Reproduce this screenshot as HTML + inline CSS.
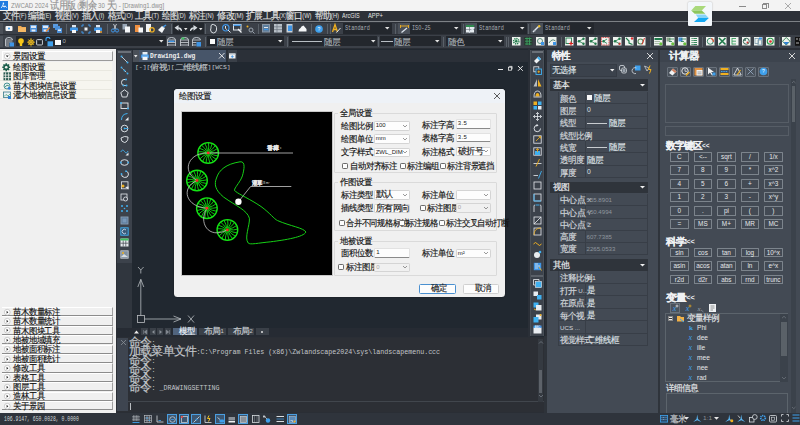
<!DOCTYPE html><html><head><meta charset="utf-8"><style>
*{margin:0;padding:0;box-sizing:border-box}
html,body{width:800px;height:425px;overflow:hidden;background:#2a2e35;font-family:"Liberation Sans",sans-serif}
div{position:absolute}
.t{white-space:nowrap;transform-origin:0 50%}
.c{font-family:'Liberation Sans',sans-serif;font-size:1.46em;letter-spacing:-0.065em;-webkit-text-stroke-width:0.15px;vertical-align:-0.07em;line-height:0}
svg{position:absolute;overflow:visible}
</style></head><body>
<div style="left:0px;top:0px;width:800px;height:11px;background:#f3f3f3;"></div>
<div style="left:0px;top:1.4px;width:8px;height:8.3px;background:#1f7ae0;"></div>
<svg style="left:0px;top:1.4px;" width="8" height="8.3" viewBox="0 0 8 8.3"><circle cx="3.4" cy="2.2" r="0.8" fill="#fff"/><path d="M3.4 2.8 L2.8 4.6 L1.3 6.8 M2.8 4.6 L4.2 6.2 L5 4.8 L6.6 6.6" stroke="#fff" stroke-width="0.9" fill="none"/></svg>
<div class="t" style="left:11px;top:1.04px;font-size:7.3px;line-height:9.12px;color:#8f8f8f;transform:scaleX(0.829);">ZWCAD 2024 <span class="c">试用版</span> (<span class="c">剩余</span> 30 <span class="c">天</span>) - [Drawing1.dwg]</div>
<div style="left:738.5px;top:5.5px;width:7px;height:0.7px;background:#8a8a8a;"></div>
<div style="left:761.5px;top:3.8px;width:5.5px;height:5.5px;border:0.7px solid #8a8a8a;"></div>
<div style="left:763px;top:2.6px;width:5.5px;height:5.5px;border-top:0.7px solid #8a8a8a;border-right:0.7px solid #8a8a8a;"></div>
<svg style="left:785px;top:2.5px;" width="6" height="6" viewBox="0 0 6 6"><path d="M0 0 L6 6 M6 0 L0 6" stroke="#8a8a8a" stroke-width="0.7"/></svg>
<div style="left:0px;top:11px;width:800px;height:10.3px;background:#2d3138;"></div>
<div style="left:0px;top:21.2px;width:800px;height:1px;background:#7d8186;"></div>
<div class="t" style="left:2.5px;top:12.18px;font-size:6.6px;line-height:8.25px;color:#e2e2e2;transform:scaleX(0.857);"><span class="c">文件</span>(F)</div>
<div class="t" style="left:28px;top:12.18px;font-size:6.6px;line-height:8.25px;color:#e2e2e2;transform:scaleX(0.842);"><span class="c">编辑</span>(E)</div>
<div class="t" style="left:55px;top:12.18px;font-size:6.6px;line-height:8.25px;color:#e2e2e2;transform:scaleX(0.863);"><span class="c">视图</span>(V)</div>
<div class="t" style="left:82px;top:12.18px;font-size:6.6px;line-height:8.25px;color:#e2e2e2;transform:scaleX(0.892);"><span class="c">插入</span>(I)</div>
<div class="t" style="left:107.5px;top:12.18px;font-size:6.6px;line-height:8.25px;color:#e2e2e2;transform:scaleX(0.884);"><span class="c">格式</span>(O)</div>
<div class="t" style="left:135px;top:12.18px;font-size:6.6px;line-height:8.25px;color:#e2e2e2;transform:scaleX(0.879);"><span class="c">工具</span>(T)</div>
<div class="t" style="left:162px;top:12.18px;font-size:6.6px;line-height:8.25px;color:#e2e2e2;transform:scaleX(0.842);"><span class="c">绘图</span>(D)</div>
<div class="t" style="left:189.2px;top:12.18px;font-size:6.6px;line-height:8.25px;color:#e2e2e2;transform:scaleX(0.884);"><span class="c">标注</span>(N)</div>
<div class="t" style="left:216.7px;top:12.18px;font-size:6.6px;line-height:8.25px;color:#e2e2e2;transform:scaleX(0.929);"><span class="c">修改</span>(M)</div>
<div class="t" style="left:245.6px;top:12.18px;font-size:6.6px;line-height:8.25px;color:#e2e2e2;transform:scaleX(0.883);"><span class="c">扩展工具</span>(X)</div>
<div class="t" style="left:286.3px;top:12.18px;font-size:6.6px;line-height:8.25px;color:#e2e2e2;transform:scaleX(0.866);"><span class="c">窗口</span>(W)</div>
<div class="t" style="left:314.6px;top:12.18px;font-size:6.6px;line-height:8.25px;color:#e2e2e2;transform:scaleX(0.855);"><span class="c">帮助</span>(H)</div>
<div class="t" style="left:342.2px;top:12.18px;font-size:6.6px;line-height:8.25px;color:#e2e2e2;transform:scaleX(0.826);">ArcGIS</div>
<div class="t" style="left:367.7px;top:12.18px;font-size:6.6px;line-height:8.25px;color:#e2e2e2;transform:scaleX(0.868);">APP+</div>
<div style="left:0px;top:22.2px;width:800px;height:12.8px;background:#2c3037;"></div>
<div style="left:0px;top:22.5px;width:594px;height:11.8px;background:#3b4048;"></div>
<div style="left:0px;top:34px;width:800px;height:15px;background:#2c3037;"></div>
<div style="left:0px;top:35.2px;width:800px;height:13.2px;background:#3b4048;"></div>
<div style="left:0px;top:48.4px;width:800px;height:1.6px;background:#2a2e35;"></div>
<div style="left:0px;top:23px;width:2.5px;height:11px;background:#4b5058;"></div>
<div style="left:0px;top:36px;width:2.5px;height:11px;background:#4b5058;"></div>
<svg style="left:4.5px;top:24.5px;" width="8" height="7" viewBox="0 0 8 7"><rect x="0.5" y="1" width="7" height="5" rx="1" fill="#f4f6f8"/><circle cx="4" cy="3.6" r="1" fill="#3d9be9"/></svg>
<svg style="left:17.5px;top:24.8px;" width="8" height="7" viewBox="0 0 8 7"><path d="M0 1 h3 l1 1 h4 v5 h-8z" fill="#f0a850"/><rect x="0" y="2.5" width="8" height="4.5" fill="#f5b865"/></svg>
<svg style="left:30px;top:24.8px;" width="7" height="7" viewBox="0 0 7 7"><rect x="0" y="0" width="7" height="7" fill="#4b8fd8"/><rect x="1" y="0.6" width="5" height="2.4" fill="#dfe9f5"/><rect x="1.6" y="4.5" width="3.8" height="2" fill="#e8eef5"/></svg>
<svg style="left:42px;top:24.8px;" width="7" height="7" viewBox="0 0 7 7"><rect x="0" y="0" width="7" height="7" fill="#4b8fd8"/><rect x="1" y="0.6" width="5" height="2.4" fill="#dfe9f5"/><rect x="1.6" y="4.5" width="3" height="2" fill="#e8eef5"/><path d="M4 6.5 L7.5 2.5" stroke="#f08a30" stroke-width="1.4"/></svg>
<svg style="left:53px;top:24px;" width="9" height="9" viewBox="0 0 9 9"><rect x="0" y="0" width="5" height="4" fill="#5a9be0"/><rect x="2" y="2" width="5" height="4" fill="#4b8fd8"/><rect x="4" y="4" width="5" height="5" fill="#4b8fd8"/><rect x="5" y="5.5" width="3" height="1.5" fill="#e0eaf5"/></svg>
<div style="left:65.8px;top:24px;width:1.2px;height:9.5px;background:#596068;"></div>
<svg style="left:70px;top:24.5px;" width="8" height="8" viewBox="0 0 8 8"><rect x="2" y="0" width="4" height="2.5" fill="#dfe6ee"/><rect x="0" y="2.5" width="8" height="3.5" rx="0.8" fill="#3f95e6"/><rect x="2" y="5" width="4" height="3" fill="#f4f6f8"/></svg>
<svg style="left:82px;top:24.5px;" width="8" height="8" viewBox="0 0 8 8"><path d="M0 2 V0 H2 M6 0 H8 V2 M8 6 V8 H6 M2 8 H0 V6" stroke="#3f95e6" stroke-width="1" fill="none"/><rect x="2.5" y="2.5" width="3" height="3" fill="#eef2f6"/></svg>
<svg style="left:94px;top:24.5px;" width="8" height="8" viewBox="0 0 8 8"><rect x="2" y="0" width="4" height="2.5" fill="#dfe6ee"/><rect x="0" y="2.5" width="8" height="3.5" rx="0.8" fill="#3f95e6"/><rect x="2" y="5" width="4" height="3" fill="#f4f6f8"/><circle cx="7" cy="7" r="1" fill="#f0a030"/></svg>
<div style="left:107px;top:24px;width:1.2px;height:9.5px;background:#596068;"></div>
<svg style="left:110.5px;top:24.3px;" width="8" height="8.5" viewBox="0 0 8 8.5"><path d="M2.5 0 L5 5 M5.5 0 L3 5" stroke="#dfe6ee" stroke-width="0.8"/><circle cx="2" cy="6.5" r="1.6" stroke="#3f95e6" stroke-width="1" fill="none"/><circle cx="6" cy="6.5" r="1.6" stroke="#3f95e6" stroke-width="1" fill="none"/></svg>
<svg style="left:122px;top:24.3px;" width="8" height="8.5" viewBox="0 0 8 8.5"><rect x="0.5" y="0" width="4.5" height="5.5" fill="#9aa8b8"/><rect x="3" y="2.5" width="5" height="6" fill="#f4f6f8"/></svg>
<svg style="left:134.5px;top:24.3px;" width="8" height="8.5" viewBox="0 0 8 8.5"><rect x="0" y="1" width="5" height="7" fill="#f09040"/><rect x="3.5" y="3.5" width="4.5" height="5" fill="#f4f6f8"/></svg>
<svg style="left:145.5px;top:24.3px;" width="9" height="8.5" viewBox="0 0 9 8.5"><rect x="0" y="0" width="5" height="8" fill="#f0f2f4"/><circle cx="6" cy="5.8" r="2.2" stroke="#f0b020" stroke-width="1.2" fill="none"/></svg>
<svg style="left:158px;top:24.5px;" width="8" height="8" viewBox="0 0 8 8"><path d="M0 5 L4 8 L7 3 L4 1z" fill="#f4f6f8"/><path d="M5 2 L8 0" stroke="#3f95e6" stroke-width="1.5"/></svg>
<div style="left:171.2px;top:24px;width:1.2px;height:9.5px;background:#596068;"></div>
<div style="left:173.2px;top:22.5px;width:30.5px;height:11.5px;background:#23272d;"></div>
<svg style="left:174.5px;top:25.5px;" width="7" height="5" viewBox="0 0 7 5"><path d="M6.5 5 Q6.5 1.5 2.5 1.8 M0.5 1.8 L3 0 V3.6z" stroke="#d8dde2" stroke-width="1.1" fill="#d8dde2"/></svg>
<svg style="left:184px;top:27.5px;" width="3.5" height="2.5" viewBox="0 0 3.5 2.5"><path d="M0 0 H3.5 L1.75 2.2z" fill="#e8e8e8"/></svg>
<svg style="left:189.5px;top:25.5px;" width="7" height="5" viewBox="0 0 7 5"><path d="M0.5 5 Q0.5 1.5 4.5 1.8 M6.5 1.8 L4 0 V3.6z" stroke="#d8dde2" stroke-width="1.1" fill="#d8dde2"/></svg>
<svg style="left:198.8px;top:27.5px;" width="3.5" height="2.5" viewBox="0 0 3.5 2.5"><path d="M0 0 H3.5 L1.75 2.2z" fill="#e8e8e8"/></svg>
<div style="left:205px;top:24px;width:1.2px;height:9.5px;background:#596068;"></div>
<svg style="left:209.5px;top:24px;" width="7" height="9" viewBox="0 0 7 9"><path d="M1 4 V2 Q1 1 2 1 V0.5 Q3.5 0 4 1 Q5.5 0.5 5.5 2 Q6.5 2 6.5 3.5 V6 Q6 9 3.5 9 Q1 9 0.5 6z" stroke="#e8ecf0" stroke-width="0.9" fill="none"/></svg>
<svg style="left:221.5px;top:24px;" width="9" height="9" viewBox="0 0 9 9"><circle cx="3.8" cy="3.8" r="3.2" stroke="#3f95e6" stroke-width="1.2" fill="none"/><path d="M3.5 2 V4.5 L5 5.5 M6 6 L8.5 8.5" stroke="#dfe6ee" stroke-width="1"/></svg>
<svg style="left:233px;top:24.2px;" width="9" height="9" viewBox="0 0 9 9"><rect x="0.5" y="0.5" width="7.5" height="5.5" stroke="#dfe6ee" stroke-width="1" fill="none"/><rect x="0.5" y="0.5" width="7.5" height="1.5" fill="#3f95e6"/><path d="M5 5 L8.5 8.5" stroke="#f4f6f8" stroke-width="1.2"/></svg>
<svg style="left:245.5px;top:24.5px;" width="9" height="9" viewBox="0 0 9 9"><circle cx="1.5" cy="1.5" r="1" fill="#f0b020"/><circle cx="5" cy="5" r="2" stroke="#9aa3ad" stroke-width="1" fill="none"/><path d="M6.5 6.5 L8.5 8.5" stroke="#9aa3ad" stroke-width="1"/></svg>
<div style="left:258px;top:24px;width:1.2px;height:9.5px;background:#596068;"></div>
<svg style="left:261.5px;top:24.3px;" width="8" height="8.5" viewBox="0 0 8 8.5"><rect x="0" y="0" width="8" height="8.5" fill="#8a96a4"/><rect x="1" y="1" width="6" height="6.5" fill="#5d7f9f"/><rect x="2" y="3" width="4" height="1" fill="#e0e8f0"/><rect x="2" y="5" width="4" height="1" fill="#3f95e6"/></svg>
<svg style="left:273.5px;top:24.3px;" width="8" height="8.5" viewBox="0 0 8 8.5"><rect x="0" y="0" width="8" height="8.5" fill="#b8c0c8"/><path d="M0 2.8 H8 M0 5.6 H8 M3 0 V8.5" stroke="#6a747e" stroke-width="0.7"/></svg>
<svg style="left:286px;top:24.3px;" width="8" height="8.5" viewBox="0 0 8 8.5"><rect x="0.5" y="0" width="6" height="8.5" fill="#c8d0d8"/><rect x="2" y="1.5" width="4" height="5.5" fill="#3f95e6"/></svg>
<svg style="left:297.5px;top:25px;" width="9" height="7" viewBox="0 0 9 7"><path d="M0.5 6.5 H8.5 V4 L5.5 0.5 Q3 1 2.5 3 Q0.5 3.5 0.5 6.5z" fill="#f4f6f8"/></svg>
<div style="left:310.8px;top:24px;width:1.2px;height:9.5px;background:#596068;"></div>
<svg style="left:314.5px;top:24.5px;" width="8" height="8" viewBox="0 0 8 8"><circle cx="4" cy="4" r="3.8" fill="#3fa0ec"/><text x="4" y="6" font-size="5" fill="#fff" text-anchor="middle" font-family="Liberation Sans">?</text></svg>
<div style="left:327.2px;top:24px;width:1.2px;height:9.5px;background:#596068;"></div>
<div style="left:329.6px;top:24px;width:1.2px;height:9.5px;background:#596068;"></div>
<svg style="left:332px;top:24.3px;" width="9" height="9" viewBox="0 0 9 9"><path d="M0.5 8 L3 0.5 L5.5 8 M1.5 5.5 H4.5" stroke="#f0b020" stroke-width="1.3" fill="none"/><path d="M4.5 8.5 L8.5 4" stroke="#dfe6ee" stroke-width="1"/></svg>
<div style="left:343.2px;top:22.8px;width:49px;height:11.2px;background:#23272d;"></div>
<svg style="left:385.2px;top:27.4px;" width="4.5" height="2.5" viewBox="0 0 4.5 2.5"><path d="M0 0 H4.5 L2.25 2.5z" fill="#e2e2e2"/></svg>
<div class="t" style="left:345px;top:24.50px;font-size:6.4px;line-height:8.00px;color:#a9aeb3;font-family:Liberation Mono;transform:scaleX(0.812);">Standard</div>
<div style="left:394.5px;top:24px;width:1.2px;height:9.5px;background:#596068;"></div>
<div style="left:398px;top:23px;width:12px;height:11px;background:#4a5059;"></div>
<svg style="left:399.5px;top:24.5px;" width="9" height="8" viewBox="0 0 9 8"><path d="M0.5 1 H8.5" stroke="#f0b020" stroke-width="0.9"/><path d="M0.5 0 V3 M8.5 0 V3" stroke="#f0b020" stroke-width="0.9"/><path d="M1.5 7.5 L7 3" stroke="#dfe6ee" stroke-width="1.2"/></svg>
<div style="left:410px;top:22.8px;width:50.5px;height:11.2px;background:#23272d;"></div>
<svg style="left:453.5px;top:27.4px;" width="4.5" height="2.5" viewBox="0 0 4.5 2.5"><path d="M0 0 H4.5 L2.25 2.5z" fill="#e2e2e2"/></svg>
<div class="t" style="left:411.5px;top:24.50px;font-size:6.4px;line-height:8.00px;color:#a9aeb3;font-family:Liberation Mono;transform:scaleX(0.812);">ISO-25</div>
<div style="left:462.5px;top:24px;width:1.2px;height:9.5px;background:#596068;"></div>
<div style="left:464.5px;top:23px;width:12.5px;height:11px;background:#4a5059;"></div>
<svg style="left:466px;top:24.5px;" width="9" height="8" viewBox="0 0 9 8"><rect x="0" y="0" width="8" height="7.5" fill="#e6ecf0"/><rect x="0" y="0" width="8" height="2" fill="#2f8a4f"/><path d="M0 4.5 H8 M3.5 2 V7.5" stroke="#6a747e" stroke-width="0.6"/><path d="M3 7.5 L8.5 2.5" stroke="#dfe6ee" stroke-width="1.1"/></svg>
<div style="left:477px;top:22.8px;width:50px;height:11.2px;background:#23272d;"></div>
<svg style="left:520px;top:27.4px;" width="4.5" height="2.5" viewBox="0 0 4.5 2.5"><path d="M0 0 H4.5 L2.25 2.5z" fill="#e2e2e2"/></svg>
<div class="t" style="left:478.5px;top:24.50px;font-size:6.4px;line-height:8.00px;color:#a9aeb3;font-family:Liberation Mono;transform:scaleX(0.812);">Standard</div>
<div style="left:528.3px;top:24px;width:1.2px;height:9.5px;background:#596068;"></div>
<div style="left:530.5px;top:23px;width:12.5px;height:11px;background:#4a5059;"></div>
<svg style="left:532px;top:24.5px;" width="9" height="8" viewBox="0 0 9 8"><path d="M1 7 L6.5 1.5" stroke="#dfe6ee" stroke-width="1.4"/><path d="M1.5 5 L3 6.5" stroke="#9aa3ad" stroke-width="1"/><circle cx="7.2" cy="1.3" r="1.2" fill="#f0c030"/></svg>
<div style="left:543px;top:22.8px;width:50.5px;height:11.2px;background:#23272d;"></div>
<svg style="left:586.5px;top:27.4px;" width="4.5" height="2.5" viewBox="0 0 4.5 2.5"><path d="M0 0 H4.5 L2.25 2.5z" fill="#e2e2e2"/></svg>
<div class="t" style="left:544.5px;top:24.50px;font-size:6.4px;line-height:8.00px;color:#a9aeb3;font-family:Liberation Mono;transform:scaleX(0.812);">Standard</div>
<svg style="left:4.5px;top:37px;" width="9" height="9.5" viewBox="0 0 9 9.5"><path d="M0.5 3 Q0.5 0.5 4 0.5 Q7.5 0.5 7.5 3" stroke="#d0d6dc" stroke-width="0.9" fill="none"/><path d="M0.5 3 H7.5 M0.5 5 H7.5 M0.5 7 H4 M0.5 9 H4 M0.5 3 V9" stroke="#d0d6dc" stroke-width="0.8"/><rect x="4.5" y="5.5" width="4.5" height="4" fill="#3f95e6"/></svg>
<div style="left:15.5px;top:36px;width:150px;height:10px;background:#23272d;"></div>
<svg style="left:159px;top:40.0px;" width="4.5" height="2.5" viewBox="0 0 4.5 2.5"><path d="M0 0 H4.5 L2.25 2.5z" fill="#e2e2e2"/></svg>
<svg style="left:18px;top:37.5px;" width="6" height="8.5" viewBox="0 0 6 8.5"><circle cx="3" cy="3" r="2.8" fill="#f5c518"/><rect x="1.8" y="5" width="2.4" height="3" fill="#f5c518"/></svg>
<svg style="left:26.5px;top:37.5px;" width="8" height="8.5" viewBox="0 0 8 8.5"><circle cx="4" cy="4.2" r="2.2" stroke="#e8b820" stroke-width="1.1" fill="none"/><path d="M4 0 V8.5 M0 4.2 H8 M1.2 1.4 L6.8 7 M6.8 1.4 L1.2 7" stroke="#e8b820" stroke-width="0.8"/></svg>
<svg style="left:36px;top:38px;" width="7" height="7.5" viewBox="0 0 7 7.5"><rect x="0.5" y="1.5" width="6" height="5.5" rx="1" stroke="#c8ced4" stroke-width="0.9" fill="#3a3f46"/><rect x="2" y="3" width="3.5" height="3" fill="#22262c"/></svg>
<svg style="left:45px;top:37px;" width="8" height="9.5" viewBox="0 0 8 9.5"><path d="M1 4 V2 Q1 0.4 3 0.4 Q5 0.4 5 2" stroke="#3fa0ec" stroke-width="1.1" fill="none"/><rect x="2.5" y="4.3" width="5.5" height="5" fill="#3fa0ec"/></svg>
<div style="left:55px;top:39.5px;width:5.5px;height:5.5px;background:#fafafa;"></div>
<div class="t" style="left:62.5px;top:37.75px;font-size:6px;line-height:7.50px;color:#a8aeb4;">0</div>
<svg style="left:167.3px;top:37px;" width="9" height="9.5" viewBox="0 0 9 9.5"><path d="M0.5 3 Q0.5 0.5 4.5 0.5 Q8.5 0.5 8.5 3" stroke="#d0d6dc" stroke-width="0.9" fill="none"/><path d="M0.5 3 H8.5 M0.5 5.5 H8.5 M0.5 8 H8.5 M0.5 3 V9 M8.5 3 V9" stroke="#d0d6dc" stroke-width="0.8"/><rect x="1.5" y="3.6" width="6" height="1.4" fill="#3f95e6"/></svg>
<svg style="left:179.5px;top:37px;" width="9" height="9.5" viewBox="0 0 9 9.5"><path d="M0.5 3 Q0.5 0.5 4.5 0.5 Q8.5 0.5 8.5 3" stroke="#d0d6dc" stroke-width="0.9" fill="none"/><path d="M0.5 3 H8.5 M0.5 5.5 H8.5 M0.5 8 H8.5 M0.5 3 V9 M8.5 3 V9" stroke="#d0d6dc" stroke-width="0.8"/><rect x="1.5" y="0.5" width="3" height="2" fill="#3fc060"/></svg>
<svg style="left:192px;top:37px;" width="9" height="9.5" viewBox="0 0 9 9.5"><path d="M0.5 3 Q0.5 0.5 4.5 0.5 Q8.5 0.5 8.5 3" stroke="#d0d6dc" stroke-width="0.9" fill="none"/><path d="M0.5 3 H8.5 M0.5 5.5 H4.5 M0.5 8 H4.5 M0.5 3 V9" stroke="#d0d6dc" stroke-width="0.8"/><rect x="4.5" y="5" width="4.5" height="4.5" fill="#3f95e6"/></svg>
<div style="left:204.5px;top:37px;width:1.2px;height:9.5px;background:#596068;"></div>
<div style="left:207px;top:36px;width:77px;height:10px;background:#23272d;"></div>
<svg style="left:278px;top:40.0px;" width="4.5" height="2.5" viewBox="0 0 4.5 2.5"><path d="M0 0 H4.5 L2.25 2.5z" fill="#e2e2e2"/></svg>
<div style="left:210px;top:38.8px;width:5px;height:5px;background:#fafafa;"></div>
<div class="t" style="left:217px;top:37.62px;font-size:6.2px;line-height:7.75px;color:#a8aeb4;transform:scaleX(0.974);"><span class="c">随层</span></div>
<div style="left:286.5px;top:37px;width:1.2px;height:9.5px;background:#596068;"></div>
<div style="left:289px;top:36px;width:87.5px;height:10px;background:#23272d;"></div>
<svg style="left:370.5px;top:40.0px;" width="4.5" height="2.5" viewBox="0 0 4.5 2.5"><path d="M0 0 H4.5 L2.25 2.5z" fill="#e2e2e2"/></svg>
<div style="left:292px;top:41.2px;width:30px;height:0.8px;background:#b8bec4;"></div>
<div class="t" style="left:324px;top:37.62px;font-size:6.2px;line-height:7.75px;color:#a8aeb4;transform:scaleX(0.974);"><span class="c">随层</span></div>
<div style="left:377.5px;top:37px;width:1.2px;height:9.5px;background:#596068;"></div>
<div style="left:380px;top:36px;width:61px;height:10px;background:#23272d;"></div>
<svg style="left:435px;top:40.0px;" width="4.5" height="2.5" viewBox="0 0 4.5 2.5"><path d="M0 0 H4.5 L2.25 2.5z" fill="#e2e2e2"/></svg>
<div style="left:381px;top:41.2px;width:12px;height:0.8px;background:#b8bec4;"></div>
<div class="t" style="left:393.5px;top:37.62px;font-size:6.2px;line-height:7.75px;color:#a8aeb4;transform:scaleX(0.974);"><span class="c">随层</span></div>
<div style="left:443px;top:37px;width:1.2px;height:9.5px;background:#596068;"></div>
<div style="left:446px;top:36px;width:58px;height:10px;background:#23272d;"></div>
<svg style="left:498px;top:40.0px;" width="4.5" height="2.5" viewBox="0 0 4.5 2.5"><path d="M0 0 H4.5 L2.25 2.5z" fill="#e2e2e2"/></svg>
<div class="t" style="left:448px;top:37.62px;font-size:6.2px;line-height:7.75px;color:#a8aeb4;transform:scaleX(0.974);"><span class="c">随色</span></div>
<div style="left:505.5px;top:36.5px;width:1.2px;height:10.5px;background:#596068;"></div>
<div style="left:507.5px;top:36.5px;width:1.2px;height:10.5px;background:#596068;"></div>
<svg style="left:512px;top:37px;" width="8.5" height="8.5" viewBox="0 0 8.5 8.5"><rect x="0" y="0" width="8.5" height="8.5" fill="#eef2ee"/><circle cx="4.25" cy="4.25" r="2.6" stroke="#1f7a4a" stroke-width="1.6" fill="none" stroke-dasharray="1.2 0.8"/><circle cx="4.25" cy="4.25" r="1.3" fill="#1f7a4a"/></svg>
<svg style="left:523.5px;top:37px;" width="8.5" height="8.5" viewBox="0 0 8.5 8.5"><rect x="0" y="0" width="8.5" height="8.5" fill="#2a3a32"/><path d="M1 1.5 H7.5 M1 4.2 H7.5 M1 7 H7.5 M3 0.5 V8 M5.5 0.5 V8" stroke="#3aa060" stroke-width="0.9"/></svg>
<svg style="left:536px;top:37px;" width="8.5" height="8.5" viewBox="0 0 8.5 8.5"><rect x="0" y="0" width="8.5" height="8.5" fill="#eef2ee"/><circle cx="4" cy="4" r="2.5" stroke="#5a8a7a" stroke-width="1" fill="none"/><rect x="5" y="5" width="3" height="3" fill="#3f95e6"/></svg>
<svg style="left:548px;top:37px;" width="8.5" height="8.5" viewBox="0 0 8.5 8.5"><rect x="0" y="0" width="8.5" height="8.5" fill="#eef2ee"/><path d="M1 6 Q4 1 7.5 4" stroke="#5a8a7a" stroke-width="1" fill="none"/><rect x="5" y="5" width="3" height="3" fill="#3f95e6"/></svg>
<div style="left:560.8px;top:37px;width:1.2px;height:9.5px;background:#596068;"></div>
<svg style="left:564.5px;top:37px;" width="8.5" height="8.5" viewBox="0 0 8.5 8.5"><rect x="0" y="0" width="8.5" height="8.5" fill="#eef2ee"/><rect x="1" y="1" width="5.5" height="5.5" stroke="#1f7a4a" stroke-width="0.9" fill="none"/><path d="M6 4.5 V8.5 M4 6.5 H8" stroke="#e02020" stroke-width="1.2"/></svg>
<svg style="left:576.5px;top:37px;" width="8.5" height="8.5" viewBox="0 0 8.5 8.5"><rect x="0" y="0" width="8.5" height="8.5" fill="#eef2ee"/><circle cx="2" cy="4.25" r="1.3" fill="#1f7a4a"/><circle cx="6.5" cy="1.8" r="1.2" fill="#1f7a4a"/><circle cx="6.5" cy="6.7" r="1.2" fill="#1f7a4a"/><path d="M2 4.25 L6.5 1.8 M2 4.25 L6.5 6.7" stroke="#1f7a4a" stroke-width="0.8"/></svg>
<svg style="left:588.5px;top:37px;" width="8.5" height="8.5" viewBox="0 0 8.5 8.5"><rect x="0" y="0" width="8.5" height="8.5" fill="#eef2ee"/><circle cx="2" cy="4.25" r="1.3" fill="#1f7a4a"/><circle cx="6.5" cy="1.8" r="1.2" fill="#1f7a4a"/><circle cx="6.5" cy="6.7" r="1.2" fill="#1f7a4a"/><path d="M2 4.25 L6.5 1.8 M2 4.25 L6.5 6.7" stroke="#1f7a4a" stroke-width="0.8"/></svg>
<svg style="left:600.5px;top:37px;" width="8.5" height="8.5" viewBox="0 0 8.5 8.5"><rect x="0" y="0" width="8.5" height="8.5" fill="#eef2ee"/><rect x="0.5" y="0.5" width="7.5" height="7.5" stroke="#d03030" stroke-width="0.9" fill="none" stroke-dasharray="1 0.7"/><circle cx="2.5" cy="4.25" r="1.2" fill="#1f7a4a"/><path d="M2.5 4.25 L6 2 M2.5 4.25 L6 6.5" stroke="#1f7a4a" stroke-width="0.8"/></svg>
<svg style="left:612.5px;top:37px;" width="8.5" height="8.5" viewBox="0 0 8.5 8.5"><rect x="0" y="0" width="8.5" height="8.5" fill="#eef2ee"/><circle cx="2" cy="4.25" r="1.3" fill="#1f7a4a"/><circle cx="6.5" cy="1.8" r="1.2" fill="#1f7a4a"/><circle cx="6.5" cy="6.7" r="1.2" fill="#e03030"/><path d="M2 4.25 L6.5 1.8 M2 4.25 L6.5 6.7" stroke="#1f7a4a" stroke-width="0.8"/></svg>
<svg style="left:624.5px;top:37px;" width="8.5" height="8.5" viewBox="0 0 8.5 8.5"><rect x="0" y="0" width="8.5" height="8.5" fill="#eef2ee"/><path d="M1 1 L4 4 L4 6 L7.5 7.5" stroke="#1f7a4a" stroke-width="1.2" fill="none"/><circle cx="7" cy="1.5" r="1.2" fill="#e03030"/></svg>
<svg style="left:636.5px;top:37px;" width="8.5" height="8.5" viewBox="0 0 8.5 8.5"><rect x="0" y="0" width="8.5" height="8.5" fill="#eef2ee"/><circle cx="3.5" cy="4.5" r="2.5" stroke="#5a8a5a" stroke-width="1.1" fill="none"/><path d="M5 7.5 L7.5 1" stroke="#e03030" stroke-width="1"/></svg>
<div style="left:650px;top:37px;width:1.2px;height:9.5px;background:#596068;"></div>
<svg style="left:653.5px;top:37px;" width="8.5" height="8.5" viewBox="0 0 8.5 8.5"><rect x="0" y="0" width="8.5" height="8.5" fill="#eef2ee"/><rect x="0.5" y="1" width="7.5" height="2" fill="#1f7a4a"/><path d="M0.5 4.5 H6 M0.5 6.5 H5" stroke="#8aa08a" stroke-width="0.7"/><circle cx="6.8" cy="6.8" r="1.6" fill="#6ac040"/></svg>
<svg style="left:665.5px;top:37px;" width="8.5" height="8.5" viewBox="0 0 8.5 8.5"><rect x="0" y="0" width="8.5" height="8.5" fill="#eef2ee"/><rect x="0.5" y="0.5" width="4" height="4" fill="#8aa08a"/><path d="M3 2 H8 M3 4.5 H6" stroke="#1f7a4a" stroke-width="0.8"/><circle cx="6.8" cy="6.8" r="1.6" fill="#6ac040"/></svg>
<svg style="left:677.5px;top:37px;" width="8.5" height="8.5" viewBox="0 0 8.5 8.5"><rect x="0" y="0" width="8.5" height="8.5" fill="#eef2ee"/><rect x="0.5" y="0.5" width="4" height="4" fill="#4a90d8"/><path d="M3 2 H8 M3 4.5 H6" stroke="#1f7a4a" stroke-width="0.8"/><circle cx="6.8" cy="6.8" r="1.6" fill="#6ac040"/></svg>
<svg style="left:689.5px;top:37px;" width="8.5" height="8.5" viewBox="0 0 8.5 8.5"><rect x="0" y="0" width="8.5" height="8.5" fill="#eef2ee"/><path d="M1.5 1.5 H7 M1.5 3.5 H7 M1.5 5.5 H7 M1.5 7.5 H7" stroke="#1f7a4a" stroke-width="0.9"/><path d="M3 1 V8" stroke="#eef2ee" stroke-width="0.6"/></svg>
<div style="left:702px;top:37px;width:1.2px;height:9.5px;background:#596068;"></div>
<svg style="left:705.5px;top:37px;" width="8.5" height="8.5" viewBox="0 0 8.5 8.5"><rect x="0" y="0" width="8.5" height="8.5" fill="#eef2ee"/><circle cx="4.25" cy="4.25" r="3" stroke="#3a8a6a" stroke-width="1" fill="none"/><path d="M5 1.5 A3 3 0 0 1 7.3 5" stroke="#e05030" stroke-width="1.1" fill="none"/></svg>
<svg style="left:717.5px;top:37px;" width="8.5" height="8.5" viewBox="0 0 8.5 8.5"><rect x="0" y="0" width="8.5" height="8.5" fill="#eef2ee"/><path d="M1 1 L7.5 7.5 M7.5 1 L1 7.5" stroke="#1f7a4a" stroke-width="1.6"/></svg>
<svg style="left:729.5px;top:37px;" width="8.5" height="8.5" viewBox="0 0 8.5 8.5"><rect x="0" y="0" width="8.5" height="8.5" fill="#eef2ee"/><path d="M2 1 V7.5 M2 1.5 H6 M2 4.2 H6 M2 7 H6" stroke="#3aa060" stroke-width="0.9"/></svg>
<svg style="left:741.5px;top:37px;" width="8.5" height="8.5" viewBox="0 0 8.5 8.5"><rect x="0" y="0" width="8.5" height="8.5" fill="#eef2ee"/><circle cx="4.25" cy="4.25" r="3" stroke="#3a6a5a" stroke-width="1" fill="none"/><circle cx="3" cy="3" r="1" fill="#3a6a5a"/><circle cx="5.5" cy="5.5" r="1" fill="#d03030"/></svg>
<svg style="left:753.5px;top:37px;" width="8.5" height="8.5" viewBox="0 0 8.5 8.5"><rect x="0" y="0" width="8.5" height="8.5" fill="#eef2ee"/><rect x="1" y="1.5" width="3.5" height="5" stroke="#7a9aaa" stroke-width="0.8" fill="none"/><rect x="4" y="3" width="3.5" height="5" stroke="#7a9aaa" stroke-width="0.8" fill="none"/><rect x="5" y="0.5" width="3" height="2" fill="#3f95e6"/></svg>
<svg style="left:765.5px;top:37px;" width="8.5" height="8.5" viewBox="0 0 8.5 8.5"><rect x="0" y="0" width="8.5" height="8.5" fill="#eef2ee"/><circle cx="4.25" cy="4.25" r="3" stroke="#2a9a4a" stroke-width="1.1" fill="none"/><circle cx="4.5" cy="4.5" r="1.3" fill="#e03030"/></svg>
<div style="left:778.5px;top:37px;width:1.2px;height:9.5px;background:#596068;"></div>
<svg style="left:782px;top:37px;" width="8.5" height="8.5" viewBox="0 0 8.5 8.5"><rect x="0" y="0" width="8.5" height="8.5" fill="#eef2ee"/><path d="M4.25 0.5 L8 4.25 L4.25 8 L0.5 4.25z" stroke="#2a7a4a" stroke-width="0.9" fill="none"/><path d="M1.5 5 H7 L4.25 8z" fill="#2f7fd6"/></svg>
<svg style="left:794.5px;top:37px;" width="8.5" height="8.5" viewBox="0 0 8.5 8.5"><rect x="0" y="0" width="8.5" height="8.5" fill="#111"/><rect x="0" y="0" width="8.5" height="8.5" fill="#111"/><path d="M1 2 H3 M5 1 V4 M1 6 H4 M6 5 H8" stroke="#ddd" stroke-width="0.8"/></svg>
<div style="left:688px;top:2.1px;width:24px;height:23.7px;background:#f3f7fb;box-shadow:0 0 1.5px rgba(0,0,0,.35);border-radius:1px;"></div>
<svg style="left:688px;top:2.1px;" width="24" height="24" viewBox="0 0 24 24"><path d="M7.4 3.9 H18 L13.75 8.5 H3.2z" fill="#a9d97c"/><path d="M3.2 8.5 H13.75 L17.3 11.7 H6.7z" fill="#8cc65c"/><path d="M7.75 12.4 H17.3 L20.8 15.9 H10.2z" fill="#86d3f7"/><path d="M10.2 15.9 H20.8 L16.6 20.1 H6z" fill="#14a8f2"/></svg>
<div style="left:0px;top:49px;width:115.5px;height:364px;background:#f0f0f0;"></div>
<div style="left:115.5px;top:49px;width:1.5px;height:364px;background:#2a2e35;"></div>
<div style="left:2px;top:51px;width:110.5px;height:9.5px;background:#f0f0f0;border:0.5px solid #fff;border-right:1px solid #9a9a9a;border-bottom:1px solid #9a9a9a;"></div>
<svg style="left:3.5px;top:52.5px;" width="6.5" height="6.5" viewBox="0 0 6.5 6.5"><circle cx="3.25" cy="3.25" r="2.9" fill="#fff" stroke="#a0a0a0" stroke-width="0.5"/><path d="M1.8 2.6 H4.7 L3.25 4.3z" fill="#222"/></svg>
<div class="t" style="left:12.5px;top:51.92px;font-size:6.2px;line-height:7.75px;color:#111;transform:scaleX(0.935);"><span class="c">景园设置</span></div>
<div style="left:0px;top:62.099999999999994px;width:111.5px;height:9.35px;background:#f6f5ef;border-bottom:0.6px solid #e9e8e0;"></div>
<div class="t" style="left:13px;top:62.92px;font-size:6.2px;line-height:7.75px;color:#111;transform:scaleX(0.935);"><span class="c">绘图设置</span></div>
<div style="left:0px;top:71.44999999999999px;width:111.5px;height:9.35px;background:#f6f5ef;border-bottom:0.6px solid #e9e8e0;"></div>
<div class="t" style="left:13px;top:72.27px;font-size:6.2px;line-height:7.75px;color:#111;transform:scaleX(0.935);"><span class="c">图库管理</span></div>
<div style="left:0px;top:80.8px;width:111.5px;height:9.35px;background:#f6f5ef;border-bottom:0.6px solid #e9e8e0;"></div>
<div class="t" style="left:13px;top:81.62px;font-size:6.2px;line-height:7.75px;color:#111;transform:scaleX(0.936);"><span class="c">苗木图块信息设置</span></div>
<div style="left:0px;top:90.14999999999999px;width:111.5px;height:9.35px;background:#f6f5ef;border-bottom:0.6px solid #e9e8e0;"></div>
<div class="t" style="left:13px;top:90.97px;font-size:6.2px;line-height:7.75px;color:#111;transform:scaleX(0.936);"><span class="c">灌木地被信息设置</span></div>
<svg style="left:2.2px;top:62.6px;" width="8.5" height="8.5" viewBox="0 0 8.5 8.5"><path d="M4.25 0.3 V8.2 M0.3 4.25 H8.2 M1.45 1.45 L7.05 7.05 M7.05 1.45 L1.45 7.05" stroke="#1b5e4a" stroke-width="1.6"/><circle cx="4.25" cy="4.25" r="2.9" fill="#1b5e4a"/><circle cx="4.25" cy="4.25" r="1.3" fill="#f6f5ef"/></svg>
<svg style="left:2.5px;top:72.2px;" width="8" height="8" viewBox="0 0 8 8"><rect x="0.5" y="0.3" width="7.5" height="8" fill="#2a5a50"/><path d="M2.6 0.3 V8.3 M5.6 0.3 V8.3 M0.5 3 H8 M0.5 5.6 H8" stroke="#f6f5ef" stroke-width="0.8"/></svg>
<svg style="left:2.5px;top:81.6px;" width="8" height="8" viewBox="0 0 8 8"><circle cx="4" cy="4" r="3" stroke="#3a8a8a" stroke-width="0.9" fill="#e0eeee"/><path d="M2 5 Q4 2 6 4" stroke="#2a7a5a" stroke-width="0.8" fill="none"/><circle cx="6.3" cy="6.3" r="1.5" fill="#2f80d0"/></svg>
<svg style="left:2.5px;top:90.9px;" width="8" height="8" viewBox="0 0 8 8"><rect x="0.5" y="1" width="7" height="5.5" stroke="#3a7a8a" stroke-width="0.8" fill="#e8f0f2"/><path d="M1 5.5 L3 3.5 L5 5 L7 3" stroke="#3a9a6a" stroke-width="0.7" fill="none"/><rect x="5" y="5" width="3" height="3" fill="#2f80d0"/></svg>
<div style="left:2px;top:307.0px;width:110.5px;height:9.2px;background:#f0f0f0;border-top:0.5px solid #fff;border-right:1px solid #a0a0a0;border-bottom:1px solid #8c8c8c;"></div>
<svg style="left:3.5px;top:308.5px;" width="6.5" height="6.5" viewBox="0 0 6.5 6.5"><circle cx="3.25" cy="3.25" r="2.9" fill="#fff" stroke="#a0a0a0" stroke-width="0.5"/><path d="M2.6 1.8 V4.7 L4.3 3.25z" fill="#222"/></svg>
<div class="t" style="left:12.5px;top:307.82px;font-size:6.2px;line-height:7.75px;color:#111;transform:scaleX(0.935);"><span class="c">苗木数量标注</span></div>
<div style="left:2px;top:316.4px;width:110.5px;height:9.2px;background:#f0f0f0;border-top:0.5px solid #fff;border-right:1px solid #a0a0a0;border-bottom:1px solid #8c8c8c;"></div>
<svg style="left:3.5px;top:317.9px;" width="6.5" height="6.5" viewBox="0 0 6.5 6.5"><circle cx="3.25" cy="3.25" r="2.9" fill="#fff" stroke="#a0a0a0" stroke-width="0.5"/><path d="M2.6 1.8 V4.7 L4.3 3.25z" fill="#222"/></svg>
<div class="t" style="left:12.5px;top:317.22px;font-size:6.2px;line-height:7.75px;color:#111;transform:scaleX(0.935);"><span class="c">苗木数量统计</span></div>
<div style="left:2px;top:325.8px;width:110.5px;height:9.2px;background:#f0f0f0;border-top:0.5px solid #fff;border-right:1px solid #a0a0a0;border-bottom:1px solid #8c8c8c;"></div>
<svg style="left:3.5px;top:327.3px;" width="6.5" height="6.5" viewBox="0 0 6.5 6.5"><circle cx="3.25" cy="3.25" r="2.9" fill="#fff" stroke="#a0a0a0" stroke-width="0.5"/><path d="M2.6 1.8 V4.7 L4.3 3.25z" fill="#222"/></svg>
<div class="t" style="left:12.5px;top:326.62px;font-size:6.2px;line-height:7.75px;color:#111;transform:scaleX(0.935);"><span class="c">苗木图块工具</span></div>
<div style="left:2px;top:335.2px;width:110.5px;height:9.2px;background:#f0f0f0;border-top:0.5px solid #fff;border-right:1px solid #a0a0a0;border-bottom:1px solid #8c8c8c;"></div>
<svg style="left:3.5px;top:336.7px;" width="6.5" height="6.5" viewBox="0 0 6.5 6.5"><circle cx="3.25" cy="3.25" r="2.9" fill="#fff" stroke="#a0a0a0" stroke-width="0.5"/><path d="M2.6 1.8 V4.7 L4.3 3.25z" fill="#222"/></svg>
<div class="t" style="left:12.5px;top:336.02px;font-size:6.2px;line-height:7.75px;color:#111;transform:scaleX(0.935);"><span class="c">地被地域填充</span></div>
<div style="left:2px;top:344.6px;width:110.5px;height:9.2px;background:#f0f0f0;border-top:0.5px solid #fff;border-right:1px solid #a0a0a0;border-bottom:1px solid #8c8c8c;"></div>
<svg style="left:3.5px;top:346.1px;" width="6.5" height="6.5" viewBox="0 0 6.5 6.5"><circle cx="3.25" cy="3.25" r="2.9" fill="#fff" stroke="#a0a0a0" stroke-width="0.5"/><path d="M2.6 1.8 V4.7 L4.3 3.25z" fill="#222"/></svg>
<div class="t" style="left:12.5px;top:345.43px;font-size:6.2px;line-height:7.75px;color:#111;transform:scaleX(0.935);"><span class="c">地被面积标注</span></div>
<div style="left:2px;top:354.0px;width:110.5px;height:9.2px;background:#f0f0f0;border-top:0.5px solid #fff;border-right:1px solid #a0a0a0;border-bottom:1px solid #8c8c8c;"></div>
<svg style="left:3.5px;top:355.5px;" width="6.5" height="6.5" viewBox="0 0 6.5 6.5"><circle cx="3.25" cy="3.25" r="2.9" fill="#fff" stroke="#a0a0a0" stroke-width="0.5"/><path d="M2.6 1.8 V4.7 L4.3 3.25z" fill="#222"/></svg>
<div class="t" style="left:12.5px;top:354.82px;font-size:6.2px;line-height:7.75px;color:#111;transform:scaleX(0.935);"><span class="c">地被面积统计</span></div>
<div style="left:2px;top:363.4px;width:110.5px;height:9.2px;background:#f0f0f0;border-top:0.5px solid #fff;border-right:1px solid #a0a0a0;border-bottom:1px solid #8c8c8c;"></div>
<svg style="left:3.5px;top:364.9px;" width="6.5" height="6.5" viewBox="0 0 6.5 6.5"><circle cx="3.25" cy="3.25" r="2.9" fill="#fff" stroke="#a0a0a0" stroke-width="0.5"/><path d="M2.6 1.8 V4.7 L4.3 3.25z" fill="#222"/></svg>
<div class="t" style="left:12.5px;top:364.22px;font-size:6.2px;line-height:7.75px;color:#111;transform:scaleX(0.935);"><span class="c">修改工具</span></div>
<div style="left:2px;top:372.8px;width:110.5px;height:9.2px;background:#f0f0f0;border-top:0.5px solid #fff;border-right:1px solid #a0a0a0;border-bottom:1px solid #8c8c8c;"></div>
<svg style="left:3.5px;top:374.3px;" width="6.5" height="6.5" viewBox="0 0 6.5 6.5"><circle cx="3.25" cy="3.25" r="2.9" fill="#fff" stroke="#a0a0a0" stroke-width="0.5"/><path d="M2.6 1.8 V4.7 L4.3 3.25z" fill="#222"/></svg>
<div class="t" style="left:12.5px;top:373.62px;font-size:6.2px;line-height:7.75px;color:#111;transform:scaleX(0.935);"><span class="c">表格工具</span></div>
<div style="left:2px;top:382.2px;width:110.5px;height:9.2px;background:#f0f0f0;border-top:0.5px solid #fff;border-right:1px solid #a0a0a0;border-bottom:1px solid #8c8c8c;"></div>
<svg style="left:3.5px;top:383.7px;" width="6.5" height="6.5" viewBox="0 0 6.5 6.5"><circle cx="3.25" cy="3.25" r="2.9" fill="#fff" stroke="#a0a0a0" stroke-width="0.5"/><path d="M2.6 1.8 V4.7 L4.3 3.25z" fill="#222"/></svg>
<div class="t" style="left:12.5px;top:383.02px;font-size:6.2px;line-height:7.75px;color:#111;transform:scaleX(0.935);"><span class="c">图层工具</span></div>
<div style="left:2px;top:391.6px;width:110.5px;height:9.2px;background:#f0f0f0;border-top:0.5px solid #fff;border-right:1px solid #a0a0a0;border-bottom:1px solid #8c8c8c;"></div>
<svg style="left:3.5px;top:393.1px;" width="6.5" height="6.5" viewBox="0 0 6.5 6.5"><circle cx="3.25" cy="3.25" r="2.9" fill="#fff" stroke="#a0a0a0" stroke-width="0.5"/><path d="M2.6 1.8 V4.7 L4.3 3.25z" fill="#222"/></svg>
<div class="t" style="left:12.5px;top:392.43px;font-size:6.2px;line-height:7.75px;color:#111;transform:scaleX(0.935);"><span class="c">造林工具</span></div>
<div style="left:2px;top:401.0px;width:110.5px;height:9.2px;background:#f0f0f0;border-top:0.5px solid #fff;border-right:1px solid #a0a0a0;border-bottom:1px solid #8c8c8c;"></div>
<svg style="left:3.5px;top:402.5px;" width="6.5" height="6.5" viewBox="0 0 6.5 6.5"><circle cx="3.25" cy="3.25" r="2.9" fill="#fff" stroke="#a0a0a0" stroke-width="0.5"/><path d="M2.6 1.8 V4.7 L4.3 3.25z" fill="#222"/></svg>
<div class="t" style="left:12.5px;top:401.82px;font-size:6.2px;line-height:7.75px;color:#111;transform:scaleX(0.935);"><span class="c">关于景园</span></div>
<div style="left:117px;top:49px;width:428px;height:289px;background:#212830;"></div>
<div style="left:131.5px;top:49.5px;width:398px;height:12px;background:#2b3038;"></div>
<div style="left:133px;top:50px;width:5.5px;height:11.5px;background:#4a5058;"></div>
<svg style="left:134px;top:54.5px;" width="3.5" height="3" viewBox="0 0 3.5 3"><path d="M0 0 H3.5 L1.75 2.5z" fill="#e8e8e8"/></svg>
<div style="left:138.5px;top:50px;width:87px;height:11.5px;background:#475569;"></div>
<svg style="left:140.5px;top:51.8px;" width="8" height="8" viewBox="0 0 8 8"><rect x="1.5" y="0" width="5" height="3" fill="#e8eef4"/><rect x="0" y="2.5" width="8" height="3.5" rx="0.8" fill="#3f95e6"/><rect x="1.5" y="5" width="5" height="3" fill="#f4f6f8"/><path d="M1 4.2 H7" stroke="#fff" stroke-width="0.5"/></svg>
<div class="t" style="left:149.5px;top:51.62px;font-size:7px;line-height:8.75px;color:#f0f0f0;font-family:Liberation Mono;font-weight:bold;transform:scaleX(0.896);">Drawing1.dwg</div>
<svg style="left:218.5px;top:53px;" width="5.5" height="5.5" viewBox="0 0 5.5 5.5"><path d="M0 0 L5.5 5.5 M5.5 0 L0 5.5" stroke="#f0f0f0" stroke-width="0.9"/></svg>
<div style="left:227.5px;top:50px;width:9.5px;height:11.5px;background:#3a4048;"></div>
<svg style="left:229px;top:52.5px;" width="7" height="6" viewBox="0 0 7 6"><rect x="0" y="0.5" width="6.5" height="5" fill="#f0f2f4"/><rect x="0" y="0.5" width="6.5" height="1.3" fill="#c8ced4"/><path d="M3.3 2.2 V5 M1.9 3.6 H4.7" stroke="#3f95e6" stroke-width="0.8"/></svg>
<div class="t" style="left:135px;top:63.67px;font-size:5.8px;line-height:7.25px;color:#c0c5ca;font-family:Liberation Mono;transform:scaleX(1.106);">[-][<span class="c">俯视</span>][<span class="c">二维线框</span>][WCS]</div>
<div style="left:498.3px;top:69.2px;width:5.2px;height:1.1px;background:#e8e8e8;"></div>
<svg style="left:508px;top:66px;" width="5.5" height="5.5" viewBox="0 0 5.5 5.5"><rect x="0.4" y="1.2" width="3" height="3" stroke="#e8e8e8" stroke-width="0.8" fill="none"/><path d="M1.2 0.4 H4.1 V3.3" stroke="#e8e8e8" stroke-width="0.8" fill="none"/></svg>
<svg style="left:518.2px;top:66.2px;" width="4.8" height="4.8" viewBox="0 0 4.8 4.8"><path d="M0 0 L4.8 4.8 M4.8 0 L0 4.8" stroke="#e8e8e8" stroke-width="1"/></svg>
<div style="left:117px;top:50px;width:15px;height:288px;background:#30363e;"></div>
<div style="left:117px;top:50px;width:14.5px;height:212.5px;background:#3c424b;"></div>
<div style="left:118px;top:50.5px;width:12.5px;height:0.8px;background:#6a7078;"></div>
<div style="left:118px;top:52.3px;width:12.5px;height:0.8px;background:#6a7078;"></div>
<svg style="left:119.5px;top:54.8px;" width="9" height="9" viewBox="0 0 9 9"><path d="M1.5 1.5 L7.5 7.5" stroke="#e8ecf0" stroke-width="0.8"/><circle cx="1.5" cy="1.5" r="1" fill="#3fb0f0"/><circle cx="7.5" cy="7.5" r="1" fill="#3fb0f0"/></svg>
<svg style="left:119.5px;top:66.28px;" width="9" height="9" viewBox="0 0 9 9"><path d="M1.5 1.5 L7.5 7.5" stroke="#e8ecf0" stroke-width="0.8" stroke-dasharray="1.5 1"/><circle cx="1.5" cy="1.5" r="0.9" fill="#3fb0f0"/><circle cx="4.5" cy="4.5" r="0.9" fill="#3fb0f0"/><circle cx="7.5" cy="7.5" r="0.9" fill="#3fb0f0"/></svg>
<svg style="left:119.5px;top:77.75999999999999px;" width="9" height="9" viewBox="0 0 9 9"><path d="M6 1.5 H4 Q1.5 1.5 1.5 4.5 Q1.5 7.5 4 7.5 H6.5" stroke="#e8ecf0" stroke-width="0.9" fill="none"/><circle cx="6" cy="1.5" r="1" fill="#3fb0f0"/><circle cx="6.5" cy="7.5" r="1" fill="#3fb0f0"/><circle cx="3.5" cy="7.5" r="0.9" fill="#3fb0f0"/></svg>
<svg style="left:119.5px;top:89.24px;" width="9" height="9" viewBox="0 0 9 9"><path d="M4.5 0.8 L8.2 3.6 L6.8 8 H2.2 L0.8 3.6z" stroke="#e8ecf0" stroke-width="0.9" fill="none"/></svg>
<svg style="left:119.5px;top:100.72px;" width="9" height="9" viewBox="0 0 9 9"><rect x="1" y="2" width="7" height="5.5" stroke="#e8ecf0" stroke-width="0.9" fill="none"/><circle cx="1" cy="2" r="1" fill="#3fb0f0"/><circle cx="8" cy="7.5" r="1" fill="#3fb0f0"/></svg>
<svg style="left:119.5px;top:112.2px;" width="9" height="9" viewBox="0 0 9 9"><path d="M1.5 8 Q1.5 2 7.5 1.5" stroke="#3fb0f0" stroke-width="1" fill="none"/><path d="M5 8.5 L8.5 5 V8.5z" fill="#e8ecf0"/></svg>
<svg style="left:119.5px;top:123.68px;" width="9" height="9" viewBox="0 0 9 9"><circle cx="4.5" cy="4.5" r="3.3" stroke="#e8ecf0" stroke-width="0.9" fill="none"/><path d="M4.5 4.5 H7.8" stroke="#3fb0f0" stroke-width="0.9"/><circle cx="4.5" cy="4.5" r="0.9" fill="#3fb0f0"/></svg>
<svg style="left:119.5px;top:135.16px;" width="9" height="9" viewBox="0 0 9 9"><path d="M1 3 Q4.5 0.5 8 2 Q8 7 4.5 7.5 Q1 7 1 3z" stroke="#e8ecf0" stroke-width="0.9" fill="none"/></svg>
<svg style="left:119.5px;top:146.64px;" width="9" height="9" viewBox="0 0 9 9"><path d="M0.8 5 Q2.5 1.5 4.5 4.5 Q6.5 7.5 8 4" stroke="#3fb0f0" stroke-width="0.9" fill="none"/><path d="M5.5 8.5 L8.5 5.5 V8.5z" fill="#e8ecf0"/></svg>
<svg style="left:119.5px;top:158.12px;" width="9" height="9" viewBox="0 0 9 9"><ellipse cx="4.5" cy="4.5" rx="3.8" ry="2.8" stroke="#e8ecf0" stroke-width="0.9" fill="none"/><circle cx="0.8" cy="4.5" r="0.9" fill="#3fb0f0"/><circle cx="8.2" cy="4.5" r="0.9" fill="#3fb0f0"/></svg>
<svg style="left:119.5px;top:169.60000000000002px;" width="9" height="9" viewBox="0 0 9 9"><path d="M1.5 4 A3.5 3.2 0 1 0 6 1.2" stroke="#e8ecf0" stroke-width="0.9" fill="none"/><circle cx="6" cy="1.2" r="0.9" fill="#3fb0f0"/><circle cx="1.5" cy="4" r="0.9" fill="#3fb0f0"/></svg>
<svg style="left:119.5px;top:181.07999999999998px;" width="9" height="9" viewBox="0 0 9 9"><rect x="1.5" y="0.8" width="6.5" height="7" stroke="#e8ecf0" stroke-width="0.8" fill="none"/><circle cx="3" cy="5" r="1.5" fill="#f0b020"/><path d="M5 6 L8.5 8.5 V5.5z" fill="#e8ecf0"/></svg>
<svg style="left:119.5px;top:192.56px;" width="9" height="9" viewBox="0 0 9 9"><rect x="1" y="1" width="6" height="6" stroke="#e8ecf0" stroke-width="0.8" fill="none"/><circle cx="5.5" cy="6" r="2" stroke="#e8ecf0" stroke-width="0.8" fill="#3c424b"/></svg>
<svg style="left:119.5px;top:204.04000000000002px;" width="9" height="9" viewBox="0 0 9 9"><circle cx="2" cy="2" r="1" fill="#3fb0f0"/><circle cx="7" cy="2" r="1" fill="#3fb0f0"/><circle cx="2" cy="7" r="1" fill="#3fb0f0"/><circle cx="7" cy="7" r="1" fill="#3fb0f0"/><circle cx="4.5" cy="4.5" r="0.8" fill="#3fb0f0"/></svg>
<svg style="left:119.5px;top:215.51999999999998px;" width="9" height="9" viewBox="0 0 9 9"><rect x="1" y="1" width="7" height="7" stroke="#8aa0b8" stroke-width="0.9" fill="#5a7898"/><rect x="2.5" y="2.5" width="4" height="4" fill="#7a98b8"/></svg>
<svg style="left:119.5px;top:227.0px;" width="9" height="9" viewBox="0 0 9 9"><rect x="0.8" y="0.8" width="7.4" height="7.4" stroke="#3fb0f0" stroke-width="0.9" fill="#3a5a78"/><path d="M6 3 A2.2 2.2 0 1 0 6 6" stroke="#c8dcf0" stroke-width="0.9" fill="none"/></svg>
<svg style="left:119.5px;top:238.48000000000002px;" width="9" height="9" viewBox="0 0 9 9"><rect x="0.5" y="0.5" width="8" height="8" fill="#e8ecf0"/><rect x="0.5" y="0.5" width="8" height="2" fill="#3fc060"/><path d="M3.2 2.5 V8.5 M5.8 2.5 V8.5 M0.5 5.2 H8.5" stroke="#3c424b" stroke-width="0.7"/></svg>
<svg style="left:119.5px;top:249.95999999999998px;" width="9" height="9" viewBox="0 0 9 9"><rect x="0.8" y="0.8" width="7.4" height="7.4" stroke="#c8ced4" stroke-width="0.8" fill="#8090a0"/><path d="M1 7 L4 4 L8 7z" fill="#d8dde2"/><circle cx="3" cy="3" r="1" fill="#f0b020"/></svg>
<svg style="left:134px;top:265px;" width="60" height="62" viewBox="0 0 60 62"><path d="M6.8 14.4 V50.5" stroke="#b8bcc0" stroke-width="0.8"/><path d="M3.8 22 L6.8 14.4 L9.8 22" stroke="#b8bcc0" stroke-width="0.8" fill="none"/><rect x="3.5" y="50.5" width="7" height="7" stroke="#b8bcc0" stroke-width="0.8" fill="none"/><path d="M10.5 54 H47" stroke="#b8bcc0" stroke-width="0.8"/><path d="M39.5 51 L47 54 L39.5 57" stroke="#b8bcc0" stroke-width="0.8" fill="none"/><path d="M4 2 L6.8 5 L9.6 2 M6.8 5 V8.5" stroke="#b8bcc0" stroke-width="0.8" fill="none"/><path d="M54 50.5 L60 57.5 M60 50.5 L54 57.5" stroke="#b8bcc0" stroke-width="0.8"/></svg>
<div style="left:117px;top:327.5px;width:413px;height:9px;background:#262b33;"></div>
<svg style="left:134px;top:329.5px;" width="5" height="4" viewBox="0 0 5 4"><path d="M0 3.5 L2.5 0.5 L5 3.5z" fill="#e8e8e8"/></svg>
<div style="left:141px;top:328.3px;width:6.5px;height:7px;background:#3a4048;"></div>
<div style="left:149.5px;top:328.3px;width:6.5px;height:7px;background:#3a4048;"></div>
<div style="left:156.5px;top:328.3px;width:6.5px;height:7px;background:#3a4048;"></div>
<div style="left:164.5px;top:328.3px;width:6.5px;height:7px;background:#3a4048;"></div>
<svg style="left:142.5px;top:330px;" width="4" height="4" viewBox="0 0 4 4"><path d="M0.5 0 V4 M3.8 0 L1.3 2 L3.8 4z" fill="#8a9098" stroke="#8a9098" stroke-width="0.5"/></svg>
<svg style="left:151px;top:330px;" width="4" height="4" viewBox="0 0 4 4"><path d="M3.5 0 L1 2 L3.5 4z" fill="#8a9098"/></svg>
<svg style="left:158.5px;top:330px;" width="4" height="4" viewBox="0 0 4 4"><path d="M0.5 0 L3 2 L0.5 4z" fill="#8a9098"/></svg>
<svg style="left:166px;top:330px;" width="4" height="4" viewBox="0 0 4 4"><path d="M3.5 0 V4 M0.2 0 L2.7 2 L0.2 4z" fill="#8a9098" stroke="#8a9098" stroke-width="0.5"/></svg>
<div style="left:173px;top:328.2px;width:24px;height:7.3px;background:#51647d;"></div>
<div class="t" style="left:179px;top:328.25px;font-size:6px;line-height:7.50px;color:#eef2f6;transform:scaleX(0.932);"><span class="c">模型</span></div>
<div style="left:199px;top:328.2px;width:26.5px;height:7.3px;background:#3a4048;"></div>
<div class="t" style="left:204px;top:328.25px;font-size:6px;line-height:7.50px;color:#c8cdd2;transform:scaleX(0.976);"><span class="c">布局</span>1</div>
<div style="left:227.5px;top:328.2px;width:26.5px;height:7.3px;background:#3a4048;"></div>
<div class="t" style="left:232.5px;top:328.25px;font-size:6px;line-height:7.50px;color:#c8cdd2;transform:scaleX(0.976);"><span class="c">布局</span>2</div>
<div style="left:255.5px;top:328.2px;width:13.5px;height:7.3px;background:#3a4048;"></div>
<div style="left:261px;top:331px;width:2px;height:2px;background:#e0e0e0;border-radius:1px;"></div>
<div style="left:528px;top:49px;width:1.5px;height:289px;background:#2a2f37;"></div>
<div style="left:529.5px;top:50px;width:14.5px;height:286px;background:#3c424b;border-left:0.6px solid #4a5058;border-right:0.6px solid #4a5058;"></div>
<div style="left:531.5px;top:50.5px;width:11px;height:0.8px;background:#6a7078;"></div>
<div style="left:531.5px;top:52.3px;width:11px;height:0.8px;background:#6a7078;"></div>
<svg style="left:532.5px;top:54.5px;" width="9" height="9" viewBox="0 0 9 9"><path d="M1 6 L5.5 1.5 L8 4 L3.5 8.5z" fill="#f0f2f4"/><path d="M5.5 1.5 L8 4 L6.5 5.5 L4 3z" fill="#3fb0f0"/></svg>
<svg style="left:532.5px;top:66.0px;" width="9" height="9" viewBox="0 0 9 9"><rect x="0.8" y="0.8" width="5" height="5" stroke="#e8ecf0" stroke-width="0.8" fill="none"/><rect x="3" y="3" width="5.5" height="5.5" stroke="#3fb0f0" stroke-width="0.9" fill="#3c424b"/><path d="M5.7 4.5 V7 M4.5 5.7 H7" stroke="#f0b020" stroke-width="0.8"/></svg>
<svg style="left:532.5px;top:77.5px;" width="9" height="9" viewBox="0 0 9 9"><path d="M4 1 V8.5 L0.5 8.5z" fill="#b8bec4"/><path d="M5 1 V8.5 H8.5z" fill="#f0b020"/></svg>
<svg style="left:532.5px;top:89.0px;" width="9" height="9" viewBox="0 0 9 9"><path d="M1 7.5 Q1 2 4.5 2 Q8 2 8 7.5" stroke="#e8ecf0" stroke-width="0.8" fill="none"/><path d="M2.5 7.5 Q2.5 4 4.5 4 Q6.5 4 6.5 7.5z" fill="#f0b020"/><path d="M0.5 8 H8.5" stroke="#e8ecf0" stroke-width="0.8"/></svg>
<svg style="left:532.5px;top:100.5px;" width="9" height="9" viewBox="0 0 9 9"><rect x="0.5" y="0.5" width="3.5" height="3.5" fill="#f0b020"/><rect x="5" y="0.5" width="3.5" height="3.5" fill="#3fb0f0"/><rect x="0.5" y="5" width="3.5" height="3.5" fill="#3fb0f0"/><rect x="5" y="5" width="3.5" height="3.5" fill="#e8ecf0"/></svg>
<svg style="left:532.5px;top:112.0px;" width="9" height="9" viewBox="0 0 9 9"><path d="M4.5 0.5 V8.5 M0.5 4.5 H8.5 M3 2 L4.5 0.5 L6 2 M3 7 L4.5 8.5 L6 7 M2 3 L0.5 4.5 L2 6 M7 3 L8.5 4.5 L7 6" stroke="#e8ecf0" stroke-width="0.8" fill="none"/></svg>
<svg style="left:532.5px;top:123.5px;" width="9" height="9" viewBox="0 0 9 9"><path d="M7.5 4.5 A3.2 3.2 0 1 1 4.5 1.3" stroke="#e8ecf0" stroke-width="0.9" fill="none"/><path d="M3.5 0 L5.5 1.3 L3.5 2.8z" fill="#e8ecf0"/></svg>
<svg style="left:532.5px;top:135.0px;" width="9" height="9" viewBox="0 0 9 9"><rect x="0.8" y="0.8" width="7.4" height="7.4" stroke="#e8ecf0" stroke-width="0.8" fill="none"/><path d="M3 6 L7.5 1.5 M5.5 1.5 H7.5 V3.5" stroke="#f0b020" stroke-width="0.8" fill="none"/></svg>
<svg style="left:532.5px;top:146.5px;" width="9" height="9" viewBox="0 0 9 9"><rect x="0.8" y="0.8" width="7.4" height="7.4" stroke="#e8ecf0" stroke-width="0.8" fill="none"/><rect x="2" y="4" width="5" height="4" fill="#3fb0f0"/><path d="M4.5 1.5 V5 M3 3 L4.5 1.5 L6 3" stroke="#f0b020" stroke-width="0.8" fill="none"/></svg>
<svg style="left:532.5px;top:158.0px;" width="9" height="9" viewBox="0 0 9 9"><path d="M0.5 5.5 H8.5" stroke="#e8ecf0" stroke-width="0.8"/><path d="M3 8.5 L6.5 1" stroke="#f0b020" stroke-width="0.9"/></svg>
<svg style="left:532.5px;top:169.5px;" width="9" height="9" viewBox="0 0 9 9"><path d="M0.5 5.5 H5" stroke="#e8ecf0" stroke-width="0.8"/><path d="M5.5 8.5 L8.5 1" stroke="#3fb0f0" stroke-width="0.9"/></svg>
<svg style="left:532.5px;top:181.0px;" width="9" height="9" viewBox="0 0 9 9"><rect x="1" y="1" width="7" height="7" stroke="#e8ecf0" stroke-width="0.8" fill="none"/></svg>
<svg style="left:532.5px;top:192.5px;" width="9" height="9" viewBox="0 0 9 9"><rect x="1" y="1" width="7" height="7" stroke="#e8ecf0" stroke-width="0.8" fill="none"/><path d="M1 1 V8 H8" stroke="#3fb0f0" stroke-width="0.9" fill="none"/></svg>
<svg style="left:532.5px;top:204.0px;" width="9" height="9" viewBox="0 0 9 9"><path d="M1 8 V2 Q1 1 2 1 M7 1 Q8 1 8 2 V8" stroke="#e8ecf0" stroke-width="0.8" fill="none"/><path d="M2.5 1 H6.5" stroke="#3fb0f0" stroke-width="0.9"/></svg>
<svg style="left:532.5px;top:215.5px;" width="9" height="9" viewBox="0 0 9 9"><rect x="1" y="1" width="7" height="7" stroke="#e8ecf0" stroke-width="0.8" fill="none"/><path d="M1 8 L8 1" stroke="#e8ecf0" stroke-width="0.8"/></svg>
<svg style="left:532.5px;top:227.0px;" width="9" height="9" viewBox="0 0 9 9"><rect x="1" y="1" width="7" height="7" stroke="#e8ecf0" stroke-width="0.8" fill="none"/><path d="M1 8 Q1 1 8 1" stroke="#f0b020" stroke-width="0.8" fill="none"/></svg>
<svg style="left:532.5px;top:238.5px;" width="9" height="9" viewBox="0 0 9 9"><path d="M0.5 5 Q2.5 2 4.5 5 Q6.5 8 8.5 5" stroke="#f0b020" stroke-width="1" fill="none"/></svg>
<svg style="left:532.5px;top:250.0px;" width="9" height="9" viewBox="0 0 9 9"><circle cx="4" cy="5" r="3" fill="#e8ecf0"/><circle cx="7" cy="2" r="1.3" fill="#3fb0f0"/></svg>
<svg style="left:532.5px;top:261.5px;" width="9" height="9" viewBox="0 0 9 9"><rect x="0.8" y="0.8" width="7.4" height="7.4" fill="#3f95e6"/><path d="M2 2 H5 M2 4 H7 M2 6 H5" stroke="#e8ecf0" stroke-width="0.8"/><path d="M6 5 L8.5 8.5" stroke="#f0b020" stroke-width="0.9"/></svg>
<div style="left:531px;top:275px;width:11.5px;height:1.8px;background:#5a6068;"></div>
<svg style="left:532.5px;top:279.0px;" width="9" height="9" viewBox="0 0 9 9"><path d="M0.5 0.5 H6 V2 M0.5 0.5 V6 H2" stroke="#e8ecf0" stroke-width="0.8" fill="none"/><rect x="2.5" y="2.5" width="6" height="6" fill="#3fb0f0" stroke="#e8ecf0" stroke-width="0.6"/></svg>
<svg style="left:532.5px;top:290.5px;" width="9" height="9" viewBox="0 0 9 9"><rect x="0.5" y="0.5" width="4.5" height="4.5" fill="#e8ecf0"/><rect x="4" y="4" width="4.5" height="4.5" fill="#3fb0f0"/></svg>
<svg style="left:532.5px;top:302.0px;" width="9" height="9" viewBox="0 0 9 9"><rect x="0.5" y="0.5" width="5" height="5" fill="#3fb0f0"/><rect x="3" y="3" width="5.5" height="5.5" fill="#e8ecf0"/><path d="M1 7 L3 8" stroke="#f0b020" stroke-width="0.9"/></svg>
<svg style="left:532.5px;top:313.5px;" width="9" height="9" viewBox="0 0 9 9"><rect x="3" y="0.5" width="5.5" height="5" fill="#e8ecf0"/><rect x="0.5" y="3" width="5" height="5.5" fill="#3fb0f0"/><circle cx="7.5" cy="1" r="1" fill="#f0b020"/></svg>
<svg style="left:532.5px;top:325.0px;" width="9" height="9" viewBox="0 0 9 9"><rect x="0.5" y="2.5" width="8" height="6" fill="#e8ecf0"/><rect x="0.5" y="0.5" width="8" height="2.5" fill="#3f95e6"/><text x="4.5" y="2.5" font-size="2.6" fill="#fff" text-anchor="middle" font-family="Liberation Sans">ABC</text></svg>
<div style="left:117px;top:336.5px;width:429px;height:2px;background:#2a2e35;"></div>
<div style="left:117px;top:338px;width:426.5px;height:74px;background:#2c2f35;"></div>
<div style="left:117px;top:338px;width:11px;height:73px;background:#3e4550;"></div>
<svg style="left:120.5px;top:339.8px;" width="5" height="5" viewBox="0 0 5 5"><path d="M0 0 L5 5 M5 0 L0 5" stroke="#8a9098" stroke-width="0.8"/></svg>
<div class="t" style="left:129px;top:338.63px;font-size:6.67px;line-height:8.34px;color:#c2c6ca;font-family:Liberation Mono;"><span style="font-size:8px"><span class="c">命令</span></span>:</div>
<div class="t" style="left:129px;top:347.73px;font-size:6.67px;line-height:8.34px;color:#c2c6ca;font-family:Liberation Mono;"><span style="font-size:8px"><span class="c">加载菜单文件</span></span>:C:\Program Files (x86)\Zwlandscape2024\sys\landscapemenu.ccc</div>
<div class="t" style="left:129px;top:356.83px;font-size:6.67px;line-height:8.34px;color:#c2c6ca;font-family:Liberation Mono;"><span style="font-size:8px"><span class="c">命令</span></span>:</div>
<div class="t" style="left:129px;top:365.93px;font-size:6.67px;line-height:8.34px;color:#c2c6ca;font-family:Liberation Mono;"><span style="font-size:8px"><span class="c">命令</span></span>:</div>
<div class="t" style="left:129px;top:375.03px;font-size:6.67px;line-height:8.34px;color:#c2c6ca;font-family:Liberation Mono;"><span style="font-size:8px"><span class="c">命令</span></span>:</div>
<div class="t" style="left:129px;top:384.13px;font-size:6.67px;line-height:8.34px;color:#c2c6ca;font-family:Liberation Mono;"><span style="font-size:8px"><span class="c">命令</span></span>: _DRAWINGSETTING</div>
<div style="left:128px;top:401px;width:415.5px;height:0.9px;background:#41464d;"></div>
<div style="left:129.5px;top:403px;width:0.9px;height:7px;background:#b8bcc0;"></div>
<div style="left:538px;top:338.5px;width:5px;height:63px;background:#353a41;"></div>
<svg style="left:538.5px;top:340.5px;" width="4" height="2.5" viewBox="0 0 4 2.5"><path d="M0 2.5 L2 0.5 L4 2.5" stroke="#8a9098" stroke-width="0.6" fill="none"/></svg>
<div style="left:538.8px;top:370px;width:3.4px;height:22.5px;background:#5d6269;"></div>
<svg style="left:538.5px;top:395.2px;" width="4" height="2.5" viewBox="0 0 4 2.5"><path d="M0 0 L2 2 L4 0" stroke="#8a9098" stroke-width="0.6" fill="none"/></svg>
<div style="left:543.5px;top:336px;width:3px;height:77px;background:#2e333a;"></div>
<div style="left:0px;top:412.5px;width:800px;height:12.5px;background:#2f343c;"></div>
<div class="t" style="left:4px;top:416.00px;font-size:6.4px;line-height:8.00px;color:#d0d4d8;font-family:Liberation Mono;transform:scaleX(0.750);">106.9147, 650.0028, 0.0000</div>
<svg style="left:132px;top:415px;" width="8" height="8" viewBox="0 0 8 8"><path d="M1 1 H7 M1 3 H7 M1 5 H7 M1 1 V6 M3 1 V6 M5 1 V6 M7 1 V6" stroke="#e8ecf0" stroke-width="0.7" stroke-dasharray="0.9 0.6"/><path d="M0.5 7.5 H7.5" stroke="#3fa0ec" stroke-width="0.9"/></svg>
<svg style="left:144px;top:415px;" width="8" height="8" viewBox="0 0 8 8"><rect x="0.5" y="0.5" width="7" height="7" stroke="#c8ccd0" stroke-width="0.6" fill="none"/><path d="M0.5 3 H7.5 M0.5 5.3 H7.5 M3 0.5 V7.5 M5.3 0.5 V7.5" stroke="#c8ccd0" stroke-width="0.6"/><circle cx="3" cy="3" r="0.8" fill="#3fa0ec"/><circle cx="5.3" cy="5.3" r="0.8" fill="#3fa0ec"/></svg>
<svg style="left:156px;top:415px;" width="8" height="8" viewBox="0 0 8 8"><path d="M1 0.5 V7 H7.5" stroke="#d8dce0" stroke-width="0.8" fill="none"/><path d="M2.5 5.5 H5" stroke="#3fa0ec" stroke-width="0.8"/></svg>
<div style="left:167px;top:413.8px;width:10px;height:10.4px;background:#3d5670;border:0.7px solid #4a9ee0;"></div>
<svg style="left:168.5px;top:415.5px;" width="7" height="7" viewBox="0 0 7 7"><circle cx="3.5" cy="3.5" r="2.8" stroke="#d8dce0" stroke-width="0.7" fill="none"/><path d="M2 3.5 H5" stroke="#3fa0ec" stroke-width="0.8"/></svg>
<div style="left:179px;top:413.8px;width:10px;height:10.4px;background:#3d5670;border:0.7px solid #4a9ee0;"></div>
<svg style="left:180.5px;top:415.5px;" width="7" height="7" viewBox="0 0 7 7"><rect x="0.5" y="0.5" width="6" height="6" stroke="#d8dce0" stroke-width="0.7" fill="none"/><circle cx="1" cy="1" r="1.1" fill="#e04040"/></svg>
<div style="left:191px;top:413.8px;width:10px;height:10.4px;background:#3d5670;border:0.7px solid #4a9ee0;"></div>
<svg style="left:192.5px;top:415.5px;" width="7" height="7" viewBox="0 0 7 7"><path d="M0.5 6.5 L6.5 0.5" stroke="#d8dce0" stroke-width="0.8"/><circle cx="3.5" cy="3.5" r="0.9" fill="#3fa0ec"/></svg>
<svg style="left:203.5px;top:415px;" width="8" height="8" viewBox="0 0 8 8"><path d="M1 0.5 V7.5 H7.5" stroke="#d8dce0" stroke-width="0.8" fill="none"/><path d="M5 0.5 L3.5 3.5 H6 L4.5 6.5" stroke="#f0c020" stroke-width="1" fill="none"/></svg>
<div style="left:215px;top:413.8px;width:10px;height:10.4px;background:#3d5670;border:0.7px solid #4a9ee0;"></div>
<svg style="left:216.5px;top:415.5px;" width="7" height="7" viewBox="0 0 7 7"><path d="M0.5 1.5 L3 3.5" stroke="#d8dce0" stroke-width="0.8"/><rect x="2.5" y="3.5" width="4.5" height="3" rx="1" fill="#3fa0ec"/></svg>
<svg style="left:228px;top:415.5px;" width="7.5" height="7" viewBox="0 0 7.5 7"><rect x="0.5" y="1" width="6.5" height="3.5" fill="#8a9098"/><rect x="0.5" y="5" width="6.5" height="1.5" fill="#f0f2f4"/></svg>
<div style="left:238px;top:413.8px;width:10px;height:10.4px;background:#3d5670;border:0.7px solid #4a9ee0;"></div>
<svg style="left:239.5px;top:415.5px;" width="7" height="7" viewBox="0 0 7 7"><rect x="0.5" y="0.5" width="6" height="6" stroke="#c8ccd0" stroke-width="0.7" fill="#8a9098"/></svg>
<svg style="left:252px;top:415px;" width="7.5" height="8" viewBox="0 0 7.5 8"><rect x="0.5" y="0.5" width="6.5" height="7" stroke="#d8dce0" stroke-width="0.8" fill="none"/><path d="M2.5 1 V7 M5 1 V7" stroke="#8a9098" stroke-width="0.5"/></svg>
<svg style="left:263px;top:415px;" width="8" height="8" viewBox="0 0 8 8"><path d="M1 0 V3 M0 1.5 H2.5" stroke="#e8ecf0" stroke-width="0.7"/><circle cx="5" cy="5.5" r="2.2" fill="#3fa0ec"/><path d="M2 2 L4 4" stroke="#e8ecf0" stroke-width="0.6"/></svg>
<svg style="left:275.5px;top:415px;" width="8.5" height="8" viewBox="0 0 8.5 8"><path d="M0.5 1.5 H8 M0.5 6.5 H8" stroke="#d8dce0" stroke-width="1.2"/><path d="M0.5 4 H8" stroke="#3fa0ec" stroke-width="0.7"/></svg>
<div style="left:287px;top:413.8px;width:10px;height:10.4px;background:#3d5670;border:0.7px solid #4a9ee0;"></div>
<svg style="left:288.5px;top:415.5px;" width="7" height="7" viewBox="0 0 7 7"><rect x="0.5" y="0.5" width="6" height="6" fill="#5a8ab8" stroke="#c8ccd0" stroke-width="0.5"/><path d="M1.5 4.5 H3.5 V6" stroke="#e8ecf0" stroke-width="0.6" fill="none"/><circle cx="5.5" cy="5.5" r="1" fill="#f0b020"/></svg>
<div style="left:174px;top:89px;width:331px;height:208px;background:#f0f0f0;border-radius:3.5px;box-shadow:0 0 1.5px rgba(0,0,0,.6);overflow:hidden;"><div style="left:0px;top:0px;width:331px;height:14px;background:#eef2f7;"></div></div>
<div class="t" style="left:179px;top:92.20px;font-size:6.4px;line-height:8.00px;color:#1a1a1a;transform:scaleX(0.958);"><span class="c">绘图设置</span></div>
<svg style="left:494px;top:92.5px;" width="6" height="6" viewBox="0 0 6 6"><path d="M0 0 L6 6 M6 0 L0 6" stroke="#333" stroke-width="0.8"/></svg>
<div style="left:180.5px;top:111px;width:152px;height:165px;background:#000;border:0.5px solid #c8c8c8;"></div>
<svg style="left:0px;top:0px;" width="800" height="425" viewBox="0 0 800 425"><circle cx="208.2" cy="152.9" r="10.3" stroke="#14e614" stroke-width="1.4" fill="none"/><path d="M209.67 153.20 Q213.71 155.56 217.94 155.91 M209.46 153.71 Q212.38 157.37 216.20 159.23 M209.09 154.11 Q210.48 158.58 213.37 161.69 M208.59 154.35 Q208.27 159.02 209.85 162.97 M208.04 154.39 Q206.06 158.63 206.10 162.88 M207.51 154.23 Q204.13 157.47 202.63 161.45 M207.08 153.89 Q202.75 155.69 199.92 158.86 M206.79 153.42 Q202.11 153.54 198.33 155.47 M206.70 152.88 Q202.29 151.30 198.07 151.73 M206.81 152.34 Q203.27 149.27 199.18 148.15 M207.11 151.87 Q204.92 147.74 201.50 145.21 M207.55 151.55 Q207.00 146.90 204.73 143.31 M208.08 151.40 Q209.25 146.87 208.43 142.70 M208.63 151.46 Q211.36 147.66 212.10 143.48 M209.12 151.72 Q213.04 149.15 215.24 145.52 M209.49 152.13 Q214.07 151.15 217.43 148.56 M209.68 152.65 Q214.30 153.39 218.38 152.19 " stroke="#12dc12" stroke-width="0.9" fill="none"/><circle cx="197" cy="180.5" r="10.3" stroke="#14e614" stroke-width="1.4" fill="none"/><path d="M198.47 180.80 Q202.51 183.16 206.74 183.51 M198.26 181.31 Q201.18 184.97 205.00 186.83 M197.89 181.71 Q199.28 186.18 202.17 189.29 M197.39 181.95 Q197.07 186.62 198.65 190.57 M196.84 181.99 Q194.86 186.23 194.90 190.48 M196.31 181.83 Q192.93 185.07 191.43 189.05 M195.88 181.49 Q191.55 183.29 188.72 186.46 M195.59 181.02 Q190.91 181.14 187.13 183.07 M195.50 180.48 Q191.09 178.90 186.87 179.33 M195.61 179.94 Q192.07 176.87 187.98 175.75 M195.91 179.47 Q193.72 175.34 190.30 172.81 M196.35 179.15 Q195.80 174.50 193.53 170.91 M196.88 179.00 Q198.05 174.47 197.23 170.30 M197.43 179.06 Q200.16 175.26 200.90 171.08 M197.92 179.32 Q201.84 176.75 204.04 173.12 M198.29 179.73 Q202.87 178.75 206.23 176.16 M198.48 180.25 Q203.10 180.99 207.18 179.79 " stroke="#12dc12" stroke-width="0.9" fill="none"/><circle cx="206.9" cy="208.2" r="10.3" stroke="#14e614" stroke-width="1.4" fill="none"/><path d="M208.37 208.50 Q212.41 210.86 216.64 211.21 M208.16 209.01 Q211.08 212.67 214.90 214.53 M207.79 209.41 Q209.18 213.88 212.07 216.99 M207.29 209.65 Q206.97 214.32 208.55 218.27 M206.74 209.69 Q204.76 213.93 204.80 218.18 M206.21 209.53 Q202.83 212.77 201.33 216.75 M205.78 209.19 Q201.45 210.99 198.62 214.16 M205.49 208.72 Q200.81 208.84 197.03 210.77 M205.40 208.18 Q200.99 206.60 196.77 207.03 M205.51 207.64 Q201.97 204.57 197.88 203.45 M205.81 207.17 Q203.62 203.04 200.20 200.51 M206.25 206.85 Q205.70 202.20 203.43 198.61 M206.78 206.70 Q207.95 202.17 207.13 198.00 M207.33 206.76 Q210.06 202.96 210.80 198.78 M207.82 207.02 Q211.74 204.45 213.94 200.82 M208.19 207.43 Q212.77 206.45 216.13 203.86 M208.38 207.95 Q213.00 208.69 217.08 207.49 " stroke="#12dc12" stroke-width="0.9" fill="none"/><circle cx="227.4" cy="229.9" r="10.3" stroke="#14e614" stroke-width="1.4" fill="none"/><path d="M228.87 230.20 Q232.91 232.56 237.14 232.91 M228.66 230.71 Q231.58 234.37 235.40 236.23 M228.29 231.11 Q229.68 235.58 232.57 238.69 M227.79 231.35 Q227.47 236.02 229.05 239.97 M227.24 231.39 Q225.26 235.63 225.30 239.88 M226.71 231.23 Q223.33 234.47 221.83 238.45 M226.28 230.89 Q221.95 232.69 219.12 235.86 M225.99 230.42 Q221.31 230.54 217.53 232.47 M225.90 229.88 Q221.49 228.30 217.27 228.73 M226.01 229.34 Q222.47 226.27 218.38 225.15 M226.31 228.87 Q224.12 224.74 220.70 222.21 M226.75 228.55 Q226.20 223.90 223.93 220.31 M227.28 228.40 Q228.45 223.87 227.63 219.70 M227.83 228.46 Q230.56 224.66 231.30 220.48 M228.32 228.72 Q232.24 226.15 234.44 222.52 M228.69 229.13 Q233.27 228.15 236.63 225.56 M228.88 229.65 Q233.50 230.39 237.58 229.19 " stroke="#12dc12" stroke-width="0.9" fill="none"/><path d="M208 153 H293 M238.4 201.8 L250.6 186.5 H291.3" stroke="#c8c8c8" stroke-width="0.8" fill="none"/><path d="M208 153 C190 152 180 170 197 180.5 C180 188 186 207 207 208.2 C198 222 208 240 227.4 229.9" stroke="#c8c8c8" stroke-width="0.8" fill="none"/><path d="M240 161.8 C246 161 244 170 242.4 175.9 C240 183 232 190 235.3 191.2 C240 195 250 199 261 206.5 C270 213 274 219 277.6 220.6 C290 226 304 228 305.9 232 C304 237 285 240 270.6 241.8 C258 243 250 245 248.2 243 C244 238 250 225 249.4 218.2 C247 210 236 206 223.5 197 C215 190 214 184 216.5 178 C219 170 226 164 240 161.8z" stroke="#16d016" stroke-width="1" fill="none"/><circle cx="238.4" cy="201.8" r="3.2" fill="#fff"/><circle cx="208.2" cy="152.9" r="1.4" fill="#ff2828"/><circle cx="197" cy="180.5" r="1.4" fill="#ff2828"/><circle cx="206.9" cy="208.2" r="1.4" fill="#ff2828"/><circle cx="227.4" cy="229.9" r="1.4" fill="#ff2828"/></svg>
<div class="t" style="left:267px;top:145.88px;font-size:4.2px;line-height:5.25px;color:#e8e8e8;font-weight:bold;"><span class="c">香樟</span></div>
<div class="t" style="left:280px;top:147.12px;font-size:3px;line-height:3.75px;color:#e8e8e8;">c</div>
<div class="t" style="left:251.5px;top:180.68px;font-size:4.2px;line-height:5.25px;color:#e8e8e8;font-weight:bold;transform:scaleX(0.869);"><span class="c">灌草</span></div>
<div class="t" style="left:260px;top:182.12px;font-size:3px;line-height:3.75px;color:#e8e8e8;transform:scaleX(1.000);">-1/3 m²</div>
<div style="left:334px;top:113.2px;width:162.5px;height:59.4px;border:0.7px solid #dadada;border-radius:1px;"></div>
<div style="left:338px;top:110.2px;width:27px;height:6px;background:#f0f0f0;"></div>
<div class="t" style="left:339.5px;top:109.33px;font-size:6.2px;line-height:7.75px;color:#111;transform:scaleX(0.935);"><span class="c">全局设置</span></div>
<div style="left:334px;top:182px;width:162.5px;height:48.8px;border:0.7px solid #dadada;border-radius:1px;"></div>
<div style="left:338px;top:179px;width:27px;height:6px;background:#f0f0f0;"></div>
<div class="t" style="left:339.5px;top:178.12px;font-size:6.2px;line-height:7.75px;color:#111;transform:scaleX(0.935);"><span class="c">作图设置</span></div>
<div style="left:334px;top:240.8px;width:162.5px;height:35.7px;border:0.7px solid #dadada;border-radius:1px;"></div>
<div style="left:338px;top:237.8px;width:27px;height:6px;background:#f0f0f0;"></div>
<div class="t" style="left:339.5px;top:236.93px;font-size:6.2px;line-height:7.75px;color:#111;transform:scaleX(0.935);"><span class="c">地被设置</span></div>
<div class="t" style="left:340.5px;top:121.72px;font-size:6.2px;line-height:7.75px;color:#111;transform:scaleX(0.935);"><span class="c">绘图比例</span></div>
<div style="left:373.5px;top:121px;width:36px;height:9.5px;background:#fdfdfd;border:0.6px solid #d4d4d4;border-radius:1.2px;"></div>
<div class="t" style="left:375.7px;top:122.00px;font-size:6px;line-height:7.50px;color:#1a1a1a;">100</div>
<svg style="left:402.5px;top:124.55px;" width="4" height="2.4" viewBox="0 0 4 2.4"><path d="M0 0 L2 2 L4 0" stroke="#555" stroke-width="0.6" fill="none"/></svg>
<div class="t" style="left:340.5px;top:134.72px;font-size:6.2px;line-height:7.75px;color:#111;transform:scaleX(0.935);"><span class="c">绘图单位</span></div>
<div style="left:373.5px;top:134.3px;width:36px;height:9.5px;background:#fdfdfd;border:0.6px solid #d4d4d4;border-radius:1.2px;"></div>
<div class="t" style="left:375.7px;top:135.30px;font-size:6px;line-height:7.50px;color:#1a1a1a;">mm</div>
<svg style="left:402.5px;top:137.85000000000002px;" width="4" height="2.4" viewBox="0 0 4 2.4"><path d="M0 0 L2 2 L4 0" stroke="#555" stroke-width="0.6" fill="none"/></svg>
<div class="t" style="left:340.5px;top:148.12px;font-size:6.2px;line-height:7.75px;color:#111;transform:scaleX(0.935);"><span class="c">文字样式</span></div>
<div style="left:373.5px;top:147.5px;width:36px;height:9.5px;background:#fdfdfd;border:0.6px solid #d4d4d4;border-radius:1.2px;"></div>
<div class="t" style="left:375.7px;top:148.50px;font-size:6px;line-height:7.50px;color:#1a1a1a;">ZWL_DIM</div>
<svg style="left:402.5px;top:151.05px;" width="4" height="2.4" viewBox="0 0 4 2.4"><path d="M0 0 L2 2 L4 0" stroke="#555" stroke-width="0.6" fill="none"/></svg>
<div style="left:342px;top:163.2px;width:6px;height:6px;background:#fdfdfd;border:0.6px solid #6a6a6a;border-radius:1.2px;"></div>
<div class="t" style="left:349.5px;top:162.32px;font-size:6.2px;line-height:7.75px;color:#111;transform:scaleX(0.935);"><span class="c">自动对齐标注</span></div>
<div style="left:399.5px;top:163.2px;width:6px;height:6px;background:#fdfdfd;border:0.6px solid #6a6a6a;border-radius:1.2px;"></div>
<div class="t" style="left:407px;top:162.32px;font-size:6.2px;line-height:7.75px;color:#111;transform:scaleX(0.935);"><span class="c">标注编组</span></div>
<div style="left:439.5px;top:163.2px;width:6px;height:6px;background:#fdfdfd;border:0.6px solid #6a6a6a;border-radius:1.2px;"></div>
<div class="t" style="left:447px;top:162.32px;font-size:6.2px;line-height:7.75px;color:#111;transform:scaleX(0.935);"><span class="c">标注背景遮挡</span></div>
<div class="t" style="left:422px;top:121.12px;font-size:6.2px;line-height:7.75px;color:#111;transform:scaleX(0.935);"><span class="c">标注字高</span></div>
<div style="left:455.5px;top:119.4px;width:35.5px;height:9.6px;background:#fdfdfd;border:0.6px solid #e2e2e2;border-bottom:0.9px solid #8a8a8a;border-radius:1.2px;"></div>
<div class="t" style="left:457.7px;top:120.15px;font-size:6px;line-height:7.50px;color:#1a1a1a;letter-spacing:0.4px;">3.5</div>
<div class="t" style="left:422px;top:134.12px;font-size:6.2px;line-height:7.75px;color:#111;transform:scaleX(0.935);"><span class="c">表格字高</span></div>
<div style="left:455.5px;top:132.8px;width:35.5px;height:9.6px;background:#fdfdfd;border:0.6px solid #e2e2e2;border-bottom:0.9px solid #8a8a8a;border-radius:1.2px;"></div>
<div class="t" style="left:457.7px;top:133.55px;font-size:6px;line-height:7.50px;color:#1a1a1a;letter-spacing:0.4px;">3.5</div>
<div class="t" style="left:422px;top:147.62px;font-size:6.2px;line-height:7.75px;color:#111;transform:scaleX(0.935);"><span class="c">标注格式</span></div>
<div style="left:455.5px;top:146.5px;width:35.5px;height:9.5px;background:#fdfdfd;border:0.6px solid #d4d4d4;border-radius:1.2px;"></div>
<div class="t" style="left:457.7px;top:147.50px;font-size:6px;line-height:7.50px;color:#1a1a1a;"><span class="c">破折号</span></div>
<svg style="left:484.0px;top:150.05px;" width="4" height="2.4" viewBox="0 0 4 2.4"><path d="M0 0 L2 2 L4 0" stroke="#555" stroke-width="0.6" fill="none"/></svg>
<div class="t" style="left:340.5px;top:191.32px;font-size:6.2px;line-height:7.75px;color:#111;transform:scaleX(0.935);"><span class="c">标注类型</span></div>
<div style="left:373.5px;top:190px;width:36px;height:9.5px;background:#fdfdfd;border:0.6px solid #d4d4d4;border-radius:1.2px;"></div>
<div class="t" style="left:375.7px;top:191.00px;font-size:6px;line-height:7.50px;color:#1a1a1a;"><span class="c">默认</span></div>
<svg style="left:402.5px;top:193.55px;" width="4" height="2.4" viewBox="0 0 4 2.4"><path d="M0 0 L2 2 L4 0" stroke="#555" stroke-width="0.6" fill="none"/></svg>
<div class="t" style="left:340.5px;top:204.43px;font-size:6.2px;line-height:7.75px;color:#111;transform:scaleX(0.935);"><span class="c">插线类型</span></div>
<div style="left:373.5px;top:203.5px;width:36px;height:9.5px;background:#fdfdfd;border:0.6px solid #d4d4d4;border-radius:1.2px;"></div>
<div class="t" style="left:375.7px;top:204.50px;font-size:6px;line-height:7.50px;color:#1a1a1a;"><span class="c">所有网向</span></div>
<svg style="left:402.5px;top:207.05px;" width="4" height="2.4" viewBox="0 0 4 2.4"><path d="M0 0 L2 2 L4 0" stroke="#555" stroke-width="0.6" fill="none"/></svg>
<div style="left:338.5px;top:219.5px;width:6px;height:6px;background:#fdfdfd;border:0.6px solid #6a6a6a;border-radius:1.2px;"></div>
<div class="t" style="left:346px;top:218.62px;font-size:6.2px;line-height:7.75px;color:#111;transform:scaleX(0.926);"><span class="c">合并不同规格标注</span></div>
<div style="left:398.5px;top:219.5px;width:6px;height:6px;background:#fdfdfd;border:0.6px solid #6a6a6a;border-radius:1.2px;"></div>
<div class="t" style="left:406px;top:218.62px;font-size:6.2px;line-height:7.75px;color:#111;transform:scaleX(0.935);"><span class="c">标注规格</span></div>
<div style="left:438.5px;top:219.5px;width:6px;height:6px;background:#fdfdfd;border:0.6px solid #6a6a6a;border-radius:1.2px;"></div>
<div class="t" style="left:446px;top:218.62px;font-size:6.2px;line-height:7.75px;color:#111;transform:scaleX(0.936);"><span class="c">标注交叉自动打断</span></div>
<div class="t" style="left:422px;top:191.32px;font-size:6.2px;line-height:7.75px;color:#111;transform:scaleX(0.935);"><span class="c">标注单位</span></div>
<div style="left:455.5px;top:190px;width:35.5px;height:9.5px;background:#fdfdfd;border:0.6px solid #d4d4d4;border-radius:1.2px;"></div>
<svg style="left:484.0px;top:193.55px;" width="4" height="2.4" viewBox="0 0 4 2.4"><path d="M0 0 L2 2 L4 0" stroke="#555" stroke-width="0.6" fill="none"/></svg>
<div style="left:419.5px;top:204.8px;width:6px;height:6px;background:#fdfdfd;border:0.6px solid #6a6a6a;border-radius:1.2px;"></div>
<div class="t" style="left:427px;top:203.93px;font-size:6.2px;line-height:7.75px;color:#111;transform:scaleX(0.935);"><span class="c">标注图层</span></div>
<div style="left:455.5px;top:203px;width:35.5px;height:9.5px;background:#f0f0f0;border:0.6px solid #d4d4d4;border-radius:1.2px;"></div>
<div class="t" style="left:457.7px;top:204.00px;font-size:6px;line-height:7.50px;color:#a8a8a8;">0</div>
<svg style="left:484.0px;top:206.55px;" width="4" height="2.4" viewBox="0 0 4 2.4"><path d="M0 0 L2 2 L4 0" stroke="#555" stroke-width="0.6" fill="none"/></svg>
<div class="t" style="left:341px;top:249.12px;font-size:6.2px;line-height:7.75px;color:#111;transform:scaleX(0.935);"><span class="c">面积位数</span></div>
<div style="left:374px;top:248px;width:35.5px;height:9.5px;background:#fdfdfd;border:0.6px solid #e2e2e2;border-bottom:0.9px solid #8a8a8a;border-radius:1.2px;"></div>
<div class="t" style="left:376.2px;top:248.70px;font-size:6px;line-height:7.50px;color:#1a1a1a;letter-spacing:0.4px;">1</div>
<div style="left:338px;top:264px;width:6px;height:6px;background:#fdfdfd;border:0.6px solid #6a6a6a;border-radius:1.2px;"></div>
<div class="t" style="left:345.5px;top:263.12px;font-size:6.2px;line-height:7.75px;color:#111;transform:scaleX(0.935);"><span class="c">标注图层</span></div>
<div style="left:374px;top:262.5px;width:35.5px;height:9.5px;background:#f0f0f0;border:0.6px solid #d4d4d4;border-radius:1.2px;"></div>
<div class="t" style="left:376.2px;top:263.50px;font-size:6px;line-height:7.50px;color:#a8a8a8;">0</div>
<svg style="left:402.5px;top:266.05px;" width="4" height="2.4" viewBox="0 0 4 2.4"><path d="M0 0 L2 2 L4 0" stroke="#555" stroke-width="0.6" fill="none"/></svg>
<div class="t" style="left:422px;top:249.12px;font-size:6.2px;line-height:7.75px;color:#111;transform:scaleX(0.935);"><span class="c">标注单位</span></div>
<div style="left:455.5px;top:248.5px;width:35.5px;height:9.5px;background:#fdfdfd;border:0.6px solid #d4d4d4;border-radius:1.2px;"></div>
<div class="t" style="left:457.7px;top:249.50px;font-size:6px;line-height:7.50px;color:#1a1a1a;">m²</div>
<svg style="left:484.0px;top:252.05px;" width="4" height="2.4" viewBox="0 0 4 2.4"><path d="M0 0 L2 2 L4 0" stroke="#555" stroke-width="0.6" fill="none"/></svg>
<div style="left:419.2px;top:284.2px;width:36.6px;height:9.4px;background:#fdfdfd;border:0.9px solid #4a90d0;border-radius:1.5px;"></div>
<div class="t" style="left:431px;top:285.25px;font-size:6px;line-height:7.50px;color:#1a1a1a;transform:scaleX(0.932);"><span class="c">确定</span></div>
<div style="left:463.3px;top:284.2px;width:35.7px;height:9.4px;background:#fdfdfd;border:0.6px solid #d0d0d0;border-radius:1.5px;"></div>
<div class="t" style="left:475px;top:285.25px;font-size:6px;line-height:7.50px;color:#1a1a1a;transform:scaleX(0.932);"><span class="c">取消</span></div>
<div style="left:546.5px;top:49.5px;width:111px;height:363px;background:#434a54;"></div>
<div style="left:546.5px;top:49.5px;width:111px;height:12.5px;background:#3d444e;"></div>
<div class="t" style="left:552px;top:51.62px;font-size:7px;line-height:8.75px;color:#eef0f2;font-weight:bold;transform:scaleX(0.954);"><span class="c">特性</span></div>
<svg style="left:647px;top:52.8px;" width="6" height="6" viewBox="0 0 6 6"><path d="M0 0 L6 6 M6 0 L0 6" stroke="#e8e8e8" stroke-width="0.9"/></svg>
<div style="left:549.5px;top:64px;width:67px;height:12.5px;background:#3b424c;border:0.5px solid #353b44;"></div>
<div class="t" style="left:551.5px;top:66.42px;font-size:6.2px;line-height:7.75px;color:#dfe3e7;transform:scaleX(0.935);"><span class="c">无选择</span></div>
<svg style="left:609.5px;top:69.2px;" width="4.5" height="2.5" viewBox="0 0 4.5 2.5"><path d="M0 0 H4.5 L2.25 2.5z" fill="#f0f0f0"/></svg>
<svg style="left:618.5px;top:65px;" width="8" height="9" viewBox="0 0 8 9"><rect x="0.5" y="0.5" width="5" height="5" rx="1.5" stroke="#d8dde2" stroke-width="0.8" fill="none"/><rect x="2.5" y="3" width="5" height="5" rx="1.5" stroke="#d8dde2" stroke-width="0.8" fill="#434a54"/><rect x="3.5" y="4" width="3" height="3" fill="#9aa3ad"/></svg>
<svg style="left:631.5px;top:65px;" width="9" height="9" viewBox="0 0 9 9"><rect x="3" y="0.5" width="5.5" height="5" fill="#3fa0ec"/><path d="M4 8.5 A3 3 0 1 1 4.5 3" stroke="#d8dde2" stroke-width="0.8" fill="none"/></svg>
<svg style="left:643.5px;top:65px;" width="9" height="9" viewBox="0 0 9 9"><path d="M0.5 1 L3 6 L5 3z" stroke="#d8dde2" stroke-width="0.7" fill="none"/><path d="M6 0.5 L4.5 4.5 H7 L5.5 8.5" stroke="#f0b020" stroke-width="1" fill="none"/></svg>
<div style="left:550px;top:79px;width:97.5px;height:11.6px;background:#2f343b;"></div>
<div class="t" style="left:552.5px;top:80.92px;font-size:6.2px;line-height:7.75px;color:#eef0f2;transform:scaleX(0.974);"><span class="c">基本</span></div>
<svg style="left:639.5px;top:83.8px;" width="5" height="2.6" viewBox="0 0 5 2.6"><path d="M0 0 H5 L2.5 2.6z" fill="#f0f0f0"/></svg>
<div style="left:557.5px;top:91.5px;width:90px;height:86.10000000000001px;border-left:0.6px solid #383e47;border-right:0.6px solid #383e47;"></div>
<div style="left:557.5px;top:103.2px;width:90px;height:0.6px;background:#383e47;"></div>
<div style="left:584.8px;top:91.5px;width:0.6px;height:12.3px;background:#383e47;"></div>
<div class="t" style="left:560px;top:94.78px;font-size:6.2px;line-height:7.75px;color:#d5d9dd;transform:scaleX(0.943);"><span class="c">颜色</span></div>
<div style="left:557.5px;top:115.5px;width:90px;height:0.6px;background:#383e47;"></div>
<div style="left:584.8px;top:103.8px;width:0.6px;height:12.3px;background:#383e47;"></div>
<div class="t" style="left:560px;top:107.08px;font-size:6.2px;line-height:7.75px;color:#d5d9dd;transform:scaleX(0.943);"><span class="c">图层</span></div>
<div style="left:557.5px;top:127.80000000000001px;width:90px;height:0.6px;background:#383e47;"></div>
<div style="left:584.8px;top:116.1px;width:0.6px;height:12.3px;background:#383e47;"></div>
<div class="t" style="left:560px;top:119.38px;font-size:6.2px;line-height:7.75px;color:#d5d9dd;transform:scaleX(0.943);"><span class="c">线型</span></div>
<div style="left:557.5px;top:140.10000000000002px;width:90px;height:0.6px;background:#383e47;"></div>
<div style="left:584.8px;top:128.4px;width:0.6px;height:12.3px;background:#383e47;"></div>
<div class="t" style="left:560px;top:131.68px;font-size:6.2px;line-height:7.75px;color:#d5d9dd;transform:scaleX(0.943);"><span class="c">线型比例</span></div>
<div style="left:557.5px;top:152.4px;width:90px;height:0.6px;background:#383e47;"></div>
<div style="left:584.8px;top:140.7px;width:0.6px;height:12.3px;background:#383e47;"></div>
<div class="t" style="left:560px;top:143.97px;font-size:6.2px;line-height:7.75px;color:#d5d9dd;transform:scaleX(0.943);"><span class="c">线宽</span></div>
<div style="left:557.5px;top:164.70000000000002px;width:90px;height:0.6px;background:#383e47;"></div>
<div style="left:584.8px;top:153.0px;width:0.6px;height:12.3px;background:#383e47;"></div>
<div class="t" style="left:560px;top:156.28px;font-size:6.2px;line-height:7.75px;color:#d5d9dd;transform:scaleX(0.943);"><span class="c">透明度</span></div>
<div style="left:557.5px;top:177.00000000000003px;width:90px;height:0.6px;background:#383e47;"></div>
<div style="left:584.8px;top:165.3px;width:0.6px;height:12.3px;background:#383e47;"></div>
<div class="t" style="left:560px;top:168.58px;font-size:6.2px;line-height:7.75px;color:#d5d9dd;transform:scaleX(0.943);"><span class="c">厚度</span></div>
<div class="t" style="left:593.5px;top:94.33px;font-size:6.2px;line-height:7.75px;color:#dfe3e7;transform:scaleX(0.974);"><span class="c">随层</span></div>
<div style="left:587px;top:95.2px;width:5px;height:5px;background:#f8f8f8;"></div>
<div class="t" style="left:587px;top:106.25px;font-size:6.8px;line-height:8.50px;color:#dfe3e7;">0</div>
<div style="left:587px;top:122.6px;width:20px;height:0.8px;background:#c8ccd0;"></div>
<div class="t" style="left:609px;top:118.92px;font-size:6.2px;line-height:7.75px;color:#dfe3e7;transform:scaleX(0.974);"><span class="c">随层</span></div>
<div class="t" style="left:587px;top:130.75px;font-size:6.8px;line-height:8.50px;color:#dfe3e7;">1</div>
<div style="left:587px;top:147.2px;width:20px;height:0.8px;background:#c8ccd0;"></div>
<div class="t" style="left:609px;top:143.43px;font-size:6.2px;line-height:7.75px;color:#dfe3e7;transform:scaleX(0.974);"><span class="c">随层</span></div>
<div class="t" style="left:587px;top:155.72px;font-size:6.2px;line-height:7.75px;color:#dfe3e7;transform:scaleX(0.974);"><span class="c">随层</span></div>
<div class="t" style="left:587px;top:167.75px;font-size:6.8px;line-height:8.50px;color:#dfe3e7;">0</div>
<div style="left:550px;top:181.5px;width:97.5px;height:11.6px;background:#2f343b;"></div>
<div class="t" style="left:552.5px;top:183.43px;font-size:6.2px;line-height:7.75px;color:#eef0f2;transform:scaleX(0.974);"><span class="c">视图</span></div>
<svg style="left:639.5px;top:186.3px;" width="5" height="2.6" viewBox="0 0 5 2.6"><path d="M0 0 H5 L2.5 2.6z" fill="#f0f0f0"/></svg>
<div style="left:557.5px;top:193.5px;width:90px;height:61.5px;border-left:0.6px solid #383e47;border-right:0.6px solid #383e47;"></div>
<div style="left:557.5px;top:205.20000000000002px;width:90px;height:0.6px;background:#383e47;"></div>
<div style="left:584.8px;top:193.5px;width:0.6px;height:12.3px;background:#383e47;"></div>
<div class="t" style="left:560px;top:196.28px;font-size:6.2px;line-height:7.75px;color:#d5d9dd;transform:scaleX(1.010);"><span class="c">中心点</span> X</div>
<div class="t" style="left:586.5px;top:195.84px;font-size:6.1px;line-height:7.62px;color:#8f969e;">555.8901</div>
<div style="left:557.5px;top:217.50000000000003px;width:90px;height:0.6px;background:#383e47;"></div>
<div style="left:584.8px;top:205.8px;width:0.6px;height:12.3px;background:#383e47;"></div>
<div class="t" style="left:560px;top:208.58px;font-size:6.2px;line-height:7.75px;color:#d5d9dd;transform:scaleX(1.010);"><span class="c">中心点</span> Y</div>
<div class="t" style="left:586.5px;top:208.14px;font-size:6.1px;line-height:7.62px;color:#8f969e;">450.4994</div>
<div style="left:557.5px;top:229.8px;width:90px;height:0.6px;background:#383e47;"></div>
<div style="left:584.8px;top:218.1px;width:0.6px;height:12.3px;background:#383e47;"></div>
<div class="t" style="left:560px;top:220.88px;font-size:6.2px;line-height:7.75px;color:#d5d9dd;transform:scaleX(1.010);"><span class="c">中心点</span> Z</div>
<div class="t" style="left:586.5px;top:220.44px;font-size:6.1px;line-height:7.62px;color:#8f969e;">0</div>
<div style="left:557.5px;top:242.10000000000002px;width:90px;height:0.6px;background:#383e47;"></div>
<div style="left:584.8px;top:230.4px;width:0.6px;height:12.3px;background:#383e47;"></div>
<div class="t" style="left:560px;top:233.18px;font-size:6.2px;line-height:7.75px;color:#d5d9dd;transform:scaleX(0.959);"><span class="c">高度</span></div>
<div class="t" style="left:586.5px;top:232.74px;font-size:6.1px;line-height:7.62px;color:#8f969e;">607.7385</div>
<div style="left:557.5px;top:254.4px;width:90px;height:0.6px;background:#383e47;"></div>
<div style="left:584.8px;top:242.7px;width:0.6px;height:12.3px;background:#383e47;"></div>
<div class="t" style="left:560px;top:245.47px;font-size:6.2px;line-height:7.75px;color:#d5d9dd;transform:scaleX(0.959);"><span class="c">宽度</span></div>
<div class="t" style="left:586.5px;top:245.04px;font-size:6.1px;line-height:7.62px;color:#8f969e;">2265.0533</div>
<div style="left:550px;top:259px;width:97.5px;height:11.6px;background:#2f343b;"></div>
<div class="t" style="left:552.5px;top:260.93px;font-size:6.2px;line-height:7.75px;color:#eef0f2;transform:scaleX(0.974);"><span class="c">其他</span></div>
<svg style="left:639.5px;top:263.8px;" width="5" height="2.6" viewBox="0 0 5 2.6"><path d="M0 0 H5 L2.5 2.6z" fill="#f0f0f0"/></svg>
<div style="left:557.5px;top:271px;width:90px;height:74.69999999999999px;border-left:0.6px solid #383e47;border-right:0.6px solid #383e47;"></div>
<div style="left:557.5px;top:282.84999999999997px;width:90px;height:0.6px;background:#383e47;"></div>
<div style="left:584.8px;top:271.0px;width:0.6px;height:12.45px;background:#383e47;"></div>
<div class="t" style="left:560px;top:274.15px;font-size:6.2px;line-height:7.75px;color:#d5d9dd;transform:scaleX(0.955);"><span class="c">注释比例</span></div>
<div class="t" style="left:587px;top:273.95px;font-size:6.2px;line-height:7.75px;color:#dfe3e7;transform:scaleX(1.000);">1:1</div>
<div style="left:557.5px;top:295.29999999999995px;width:90px;height:0.6px;background:#383e47;"></div>
<div style="left:584.8px;top:283.45px;width:0.6px;height:12.45px;background:#383e47;"></div>
<div class="t" style="left:560px;top:286.60px;font-size:6.2px;line-height:7.75px;color:#d5d9dd;transform:scaleX(0.987);"><span class="c">打开</span> U...</div>
<div class="t" style="left:587px;top:286.40px;font-size:6.2px;line-height:7.75px;color:#dfe3e7;transform:scaleX(0.942);"><span class="c">是</span></div>
<div style="left:557.5px;top:307.74999999999994px;width:90px;height:0.6px;background:#383e47;"></div>
<div style="left:584.8px;top:295.9px;width:0.6px;height:12.45px;background:#383e47;"></div>
<div class="t" style="left:560px;top:299.05px;font-size:6.2px;line-height:7.75px;color:#d5d9dd;transform:scaleX(0.970);"><span class="c">在原点</span>...</div>
<div class="t" style="left:587px;top:298.85px;font-size:6.2px;line-height:7.75px;color:#dfe3e7;transform:scaleX(0.942);"><span class="c">是</span></div>
<div style="left:557.5px;top:320.2px;width:90px;height:0.6px;background:#383e47;"></div>
<div style="left:584.8px;top:308.35px;width:0.6px;height:12.45px;background:#383e47;"></div>
<div class="t" style="left:560px;top:311.50px;font-size:6.2px;line-height:7.75px;color:#d5d9dd;transform:scaleX(0.970);"><span class="c">每个视</span>...</div>
<div class="t" style="left:587px;top:311.30px;font-size:6.2px;line-height:7.75px;color:#dfe3e7;transform:scaleX(0.942);"><span class="c">是</span></div>
<div style="left:557.5px;top:332.65px;width:90px;height:0.6px;background:#383e47;"></div>
<div style="left:584.8px;top:320.8px;width:0.6px;height:12.45px;background:#383e47;"></div>
<div class="t" style="left:560px;top:323.95px;font-size:6.2px;line-height:7.75px;color:#d5d9dd;">UCS ...</div>
<div style="left:557.5px;top:345.09999999999997px;width:90px;height:0.6px;background:#383e47;"></div>
<div style="left:584.8px;top:333.25px;width:0.6px;height:12.45px;background:#383e47;"></div>
<div class="t" style="left:560px;top:336.40px;font-size:6.2px;line-height:7.75px;color:#d5d9dd;transform:scaleX(0.955);"><span class="c">视觉样式</span></div>
<div class="t" style="left:587px;top:336.20px;font-size:6.2px;line-height:7.75px;color:#dfe3e7;transform:scaleX(0.943);"><span class="c">二维线框</span></div>
<div style="left:657.5px;top:49.5px;width:3px;height:363px;background:#2f343b;"></div>
<div style="left:660px;top:49.5px;width:140px;height:363px;background:#434a54;"></div>
<div style="left:660px;top:49.5px;width:140px;height:12px;background:#3d444e;"></div>
<div class="t" style="left:669px;top:51.62px;font-size:7px;line-height:8.75px;color:#eef0f2;font-weight:bold;transform:scaleX(1.045);"><span class="c">计算器</span></div>
<svg style="left:788.5px;top:53px;" width="6" height="6" viewBox="0 0 6 6"><path d="M0 0 L6 6 M6 0 L0 6" stroke="#e8e8e8" stroke-width="0.9"/></svg>
<div style="left:667px;top:66.5px;width:10.5px;height:10.5px;background:#4a525c;border:0.6px solid #6a727c;border-radius:1px;"></div>
<svg style="left:667.8px;top:67.3px;" width="9" height="9" viewBox="0 0 9 9"><path d="M1 6 L5 1.5 L8.5 4.5 L4.5 8.5z" fill="#f0f2f4"/><path d="M5 1.5 L8.5 4.5 L7 6 L3.5 3z" fill="#d08060"/></svg>
<div style="left:680px;top:66.5px;width:10.5px;height:10.5px;background:#4a525c;border:0.6px solid #6a727c;border-radius:1px;"></div>
<svg style="left:680.8px;top:67.3px;" width="9" height="9" viewBox="0 0 9 9"><circle cx="4" cy="4" r="3.2" stroke="#f0f2f4" stroke-width="0.9" fill="none"/><path d="M4 2 V4.3 H6" stroke="#f0f2f4" stroke-width="0.7" fill="none"/><path d="M5 8.5 L8.5 5" stroke="#f0b020" stroke-width="1.2"/></svg>
<div style="left:693px;top:66.5px;width:10.5px;height:10.5px;background:#4a525c;border:0.6px solid #6a727c;border-radius:1px;"></div>
<svg style="left:693.8px;top:67.3px;" width="9" height="9" viewBox="0 0 9 9"><rect x="0.5" y="1" width="8" height="7.5" fill="#e09040"/><rect x="2.5" y="3" width="6" height="5.5" fill="#f0f2f4"/><path d="M3.5 5 H7.5 M3.5 6.8 H7.5" stroke="#555" stroke-width="0.5"/></svg>
<div style="left:706px;top:66.5px;width:10.5px;height:10.5px;background:#4a525c;border:0.6px solid #6a727c;border-radius:1px;"></div>
<svg style="left:706.8px;top:67.3px;" width="9" height="9" viewBox="0 0 9 9"><path d="M1 0.5 L1 7.5 L3 5.5 L5 8.5 L6 8 L4.2 5 H7z" fill="#f0f2f4"/><rect x="5.5" y="5.5" width="3" height="3" fill="#3fa0ec"/></svg>
<div style="left:719px;top:66.5px;width:10.5px;height:10.5px;background:#4a525c;border:0.6px solid #6a727c;border-radius:1px;"></div>
<svg style="left:719.8px;top:67.3px;" width="9" height="9" viewBox="0 0 9 9"><rect x="0.5" y="1" width="8" height="2" fill="#f0b020"/><rect x="0.5" y="6" width="8" height="2" fill="#f0b020"/><path d="M1 4.5 H8" stroke="#3fa0ec" stroke-width="1" stroke-dasharray="1.5 0.8"/></svg>
<div style="left:732px;top:66.5px;width:10.5px;height:10.5px;background:#4a525c;border:0.6px solid #6a727c;border-radius:1px;"></div>
<svg style="left:732.8px;top:67.3px;" width="9" height="9" viewBox="0 0 9 9"><path d="M0.8 8 L4.5 1 L8.2 8z" stroke="#f0f2f4" stroke-width="0.8" fill="none"/><path d="M4 8 L7.5 3" stroke="#f0b020" stroke-width="1.1"/></svg>
<div style="left:745px;top:66.5px;width:10.5px;height:10.5px;background:#4a525c;border:0.6px solid #6a727c;border-radius:1px;"></div>
<svg style="left:745.8px;top:67.3px;" width="9" height="9" viewBox="0 0 9 9"><path d="M1.5 1.5 L7.5 7.5 M7.5 1.5 L1.5 7.5" stroke="#9ab0c8" stroke-width="0.8"/></svg>
<div style="left:758px;top:66.5px;width:10.5px;height:10.5px;background:#4a525c;border:0.6px solid #6a727c;border-radius:1px;"></div>
<svg style="left:758.8px;top:67.3px;" width="9" height="9" viewBox="0 0 9 9"><circle cx="4.5" cy="4.5" r="3.8" fill="#3fa0ec"/><text x="4.5" y="6.4" font-size="5" fill="#fff" text-anchor="middle" font-family="Liberation Sans">?</text></svg>
<div style="left:665px;top:84px;width:124px;height:39px;border:0.6px solid #565d66;"></div>
<div style="left:665px;top:126px;width:124px;height:10px;border:0.6px solid #565d66;"></div>
<div style="left:791px;top:79px;width:5px;height:334px;background:#3b424b;"></div>
<svg style="left:791.8px;top:81px;" width="3.5" height="2" viewBox="0 0 3.5 2"><path d="M0 2 L1.75 0.3 L3.5 2" stroke="#8a9098" stroke-width="0.5" fill="none"/></svg>
<div style="left:792px;top:86px;width:3px;height:36px;background:#5a6168;"></div>
<svg style="left:791.8px;top:407px;" width="3.5" height="2" viewBox="0 0 3.5 2"><path d="M0 0 L1.75 1.7 L3.5 0" stroke="#8a9098" stroke-width="0.5" fill="none"/></svg>
<div class="t" style="left:666px;top:142.35px;font-size:6.8px;line-height:8.50px;color:#f0f2f4;font-weight:bold;transform:scaleX(0.962);"><span class="c">数字键区</span><<</div>
<div style="left:670px;top:151.8px;width:18.8px;height:9.8px;border:0.7px solid #7c848c;border-radius:0.6px;"></div>
<div class="t" style="left:670px;top:152.70px;font-size:6.4px;line-height:8.00px;color:#e6e8ea;text-align:center;width:18.8px;">C</div>
<div style="left:693.5px;top:151.8px;width:18.8px;height:9.8px;border:0.7px solid #7c848c;border-radius:0.6px;"></div>
<div class="t" style="left:693.5px;top:152.70px;font-size:6.4px;line-height:8.00px;color:#e6e8ea;text-align:center;width:18.8px;"><--</div>
<div style="left:717px;top:151.8px;width:18.8px;height:9.8px;border:0.7px solid #7c848c;border-radius:0.6px;"></div>
<div class="t" style="left:717px;top:152.70px;font-size:6.4px;line-height:8.00px;color:#e6e8ea;text-align:center;width:18.8px;">sqrt</div>
<div style="left:740.5px;top:151.8px;width:18.8px;height:9.8px;border:0.7px solid #7c848c;border-radius:0.6px;"></div>
<div class="t" style="left:740.5px;top:152.70px;font-size:6.4px;line-height:8.00px;color:#e6e8ea;text-align:center;width:18.8px;">/</div>
<div style="left:764px;top:151.8px;width:18.8px;height:9.8px;border:0.7px solid #7c848c;border-radius:0.6px;"></div>
<div class="t" style="left:764px;top:152.70px;font-size:6.4px;line-height:8.00px;color:#e6e8ea;text-align:center;width:18.8px;">1/x</div>
<div style="left:670px;top:165.3px;width:18.8px;height:9.8px;border:0.7px solid #7c848c;border-radius:0.6px;"></div>
<div class="t" style="left:670px;top:166.20px;font-size:6.4px;line-height:8.00px;color:#e6e8ea;text-align:center;width:18.8px;">7</div>
<div style="left:693.5px;top:165.3px;width:18.8px;height:9.8px;border:0.7px solid #7c848c;border-radius:0.6px;"></div>
<div class="t" style="left:693.5px;top:166.20px;font-size:6.4px;line-height:8.00px;color:#e6e8ea;text-align:center;width:18.8px;">8</div>
<div style="left:717px;top:165.3px;width:18.8px;height:9.8px;border:0.7px solid #7c848c;border-radius:0.6px;"></div>
<div class="t" style="left:717px;top:166.20px;font-size:6.4px;line-height:8.00px;color:#e6e8ea;text-align:center;width:18.8px;">9</div>
<div style="left:740.5px;top:165.3px;width:18.8px;height:9.8px;border:0.7px solid #7c848c;border-radius:0.6px;"></div>
<div class="t" style="left:740.5px;top:166.20px;font-size:6.4px;line-height:8.00px;color:#e6e8ea;text-align:center;width:18.8px;">*</div>
<div style="left:764px;top:165.3px;width:18.8px;height:9.8px;border:0.7px solid #7c848c;border-radius:0.6px;"></div>
<div class="t" style="left:764px;top:166.20px;font-size:6.4px;line-height:8.00px;color:#e6e8ea;text-align:center;width:18.8px;">x^2</div>
<div style="left:670px;top:178.8px;width:18.8px;height:9.8px;border:0.7px solid #7c848c;border-radius:0.6px;"></div>
<div class="t" style="left:670px;top:179.70px;font-size:6.4px;line-height:8.00px;color:#e6e8ea;text-align:center;width:18.8px;">4</div>
<div style="left:693.5px;top:178.8px;width:18.8px;height:9.8px;border:0.7px solid #7c848c;border-radius:0.6px;"></div>
<div class="t" style="left:693.5px;top:179.70px;font-size:6.4px;line-height:8.00px;color:#e6e8ea;text-align:center;width:18.8px;">5</div>
<div style="left:717px;top:178.8px;width:18.8px;height:9.8px;border:0.7px solid #7c848c;border-radius:0.6px;"></div>
<div class="t" style="left:717px;top:179.70px;font-size:6.4px;line-height:8.00px;color:#e6e8ea;text-align:center;width:18.8px;">6</div>
<div style="left:740.5px;top:178.8px;width:18.8px;height:9.8px;border:0.7px solid #7c848c;border-radius:0.6px;"></div>
<div class="t" style="left:740.5px;top:179.70px;font-size:6.4px;line-height:8.00px;color:#e6e8ea;text-align:center;width:18.8px;">+</div>
<div style="left:764px;top:178.8px;width:18.8px;height:9.8px;border:0.7px solid #7c848c;border-radius:0.6px;"></div>
<div class="t" style="left:764px;top:179.70px;font-size:6.4px;line-height:8.00px;color:#e6e8ea;text-align:center;width:18.8px;">x^3</div>
<div style="left:670px;top:192.3px;width:18.8px;height:9.8px;border:0.7px solid #7c848c;border-radius:0.6px;"></div>
<div class="t" style="left:670px;top:193.20px;font-size:6.4px;line-height:8.00px;color:#e6e8ea;text-align:center;width:18.8px;">1</div>
<div style="left:693.5px;top:192.3px;width:18.8px;height:9.8px;border:0.7px solid #7c848c;border-radius:0.6px;"></div>
<div class="t" style="left:693.5px;top:193.20px;font-size:6.4px;line-height:8.00px;color:#e6e8ea;text-align:center;width:18.8px;">2</div>
<div style="left:717px;top:192.3px;width:18.8px;height:9.8px;border:0.7px solid #7c848c;border-radius:0.6px;"></div>
<div class="t" style="left:717px;top:193.20px;font-size:6.4px;line-height:8.00px;color:#e6e8ea;text-align:center;width:18.8px;">3</div>
<div style="left:740.5px;top:192.3px;width:18.8px;height:9.8px;border:0.7px solid #7c848c;border-radius:0.6px;"></div>
<div class="t" style="left:740.5px;top:193.20px;font-size:6.4px;line-height:8.00px;color:#e6e8ea;text-align:center;width:18.8px;">-</div>
<div style="left:764px;top:192.3px;width:18.8px;height:9.8px;border:0.7px solid #7c848c;border-radius:0.6px;"></div>
<div class="t" style="left:764px;top:193.20px;font-size:6.4px;line-height:8.00px;color:#e6e8ea;text-align:center;width:18.8px;">x^y</div>
<div style="left:670px;top:205.8px;width:18.8px;height:9.8px;border:0.7px solid #7c848c;border-radius:0.6px;"></div>
<div class="t" style="left:670px;top:206.70px;font-size:6.4px;line-height:8.00px;color:#e6e8ea;text-align:center;width:18.8px;">0</div>
<div style="left:693.5px;top:205.8px;width:18.8px;height:9.8px;border:0.7px solid #7c848c;border-radius:0.6px;"></div>
<div class="t" style="left:693.5px;top:206.70px;font-size:6.4px;line-height:8.00px;color:#e6e8ea;text-align:center;width:18.8px;">.</div>
<div style="left:717px;top:205.8px;width:18.8px;height:9.8px;border:0.7px solid #7c848c;border-radius:0.6px;"></div>
<div class="t" style="left:717px;top:206.70px;font-size:6.4px;line-height:8.00px;color:#e6e8ea;text-align:center;width:18.8px;">pi</div>
<div style="left:740.5px;top:205.8px;width:18.8px;height:9.8px;border:0.7px solid #7c848c;border-radius:0.6px;"></div>
<div class="t" style="left:740.5px;top:206.70px;font-size:6.4px;line-height:8.00px;color:#e6e8ea;text-align:center;width:18.8px;">(</div>
<div style="left:764px;top:205.8px;width:18.8px;height:9.8px;border:0.7px solid #7c848c;border-radius:0.6px;"></div>
<div class="t" style="left:764px;top:206.70px;font-size:6.4px;line-height:8.00px;color:#e6e8ea;text-align:center;width:18.8px;">)</div>
<div style="left:670px;top:219.3px;width:18.8px;height:9.8px;border:0.7px solid #7c848c;border-radius:0.6px;"></div>
<div class="t" style="left:670px;top:220.20px;font-size:6.4px;line-height:8.00px;color:#e6e8ea;text-align:center;width:18.8px;">=</div>
<div style="left:693.5px;top:219.3px;width:18.8px;height:9.8px;border:0.7px solid #7c848c;border-radius:0.6px;"></div>
<div class="t" style="left:693.5px;top:220.20px;font-size:6.4px;line-height:8.00px;color:#e6e8ea;text-align:center;width:18.8px;">MS</div>
<div style="left:717px;top:219.3px;width:18.8px;height:9.8px;border:0.7px solid #7c848c;border-radius:0.6px;"></div>
<div class="t" style="left:717px;top:220.20px;font-size:6.4px;line-height:8.00px;color:#e6e8ea;text-align:center;width:18.8px;">M+</div>
<div style="left:740.5px;top:219.3px;width:18.8px;height:9.8px;border:0.7px solid #7c848c;border-radius:0.6px;"></div>
<div class="t" style="left:740.5px;top:220.20px;font-size:6.4px;line-height:8.00px;color:#e6e8ea;text-align:center;width:18.8px;">MR</div>
<div style="left:764px;top:219.3px;width:18.8px;height:9.8px;border:0.7px solid #7c848c;border-radius:0.6px;"></div>
<div class="t" style="left:764px;top:220.20px;font-size:6.4px;line-height:8.00px;color:#e6e8ea;text-align:center;width:18.8px;">MC</div>
<div class="t" style="left:666px;top:237.95px;font-size:6.8px;line-height:8.50px;color:#f0f2f4;font-weight:bold;transform:scaleX(1.078);"><span class="c">科学</span><<</div>
<div style="left:670px;top:247.6px;width:18.8px;height:9.8px;border:0.7px solid #7c848c;border-radius:0.6px;"></div>
<div class="t" style="left:670px;top:248.50px;font-size:6.4px;line-height:8.00px;color:#e6e8ea;text-align:center;width:18.8px;">sin</div>
<div style="left:693.5px;top:247.6px;width:18.8px;height:9.8px;border:0.7px solid #7c848c;border-radius:0.6px;"></div>
<div class="t" style="left:693.5px;top:248.50px;font-size:6.4px;line-height:8.00px;color:#e6e8ea;text-align:center;width:18.8px;">cos</div>
<div style="left:717px;top:247.6px;width:18.8px;height:9.8px;border:0.7px solid #7c848c;border-radius:0.6px;"></div>
<div class="t" style="left:717px;top:248.50px;font-size:6.4px;line-height:8.00px;color:#e6e8ea;text-align:center;width:18.8px;">tan</div>
<div style="left:740.5px;top:247.6px;width:18.8px;height:9.8px;border:0.7px solid #7c848c;border-radius:0.6px;"></div>
<div class="t" style="left:740.5px;top:248.50px;font-size:6.4px;line-height:8.00px;color:#e6e8ea;text-align:center;width:18.8px;">log</div>
<div style="left:764px;top:247.6px;width:18.8px;height:9.8px;border:0.7px solid #7c848c;border-radius:0.6px;"></div>
<div class="t" style="left:764px;top:248.50px;font-size:6.4px;line-height:8.00px;color:#e6e8ea;text-align:center;width:18.8px;">10^x</div>
<div style="left:670px;top:261.1px;width:18.8px;height:9.8px;border:0.7px solid #7c848c;border-radius:0.6px;"></div>
<div class="t" style="left:670px;top:262.00px;font-size:6.4px;line-height:8.00px;color:#e6e8ea;text-align:center;width:18.8px;">asin</div>
<div style="left:693.5px;top:261.1px;width:18.8px;height:9.8px;border:0.7px solid #7c848c;border-radius:0.6px;"></div>
<div class="t" style="left:693.5px;top:262.00px;font-size:6.4px;line-height:8.00px;color:#e6e8ea;text-align:center;width:18.8px;">acos</div>
<div style="left:717px;top:261.1px;width:18.8px;height:9.8px;border:0.7px solid #7c848c;border-radius:0.6px;"></div>
<div class="t" style="left:717px;top:262.00px;font-size:6.4px;line-height:8.00px;color:#e6e8ea;text-align:center;width:18.8px;">atan</div>
<div style="left:740.5px;top:261.1px;width:18.8px;height:9.8px;border:0.7px solid #7c848c;border-radius:0.6px;"></div>
<div class="t" style="left:740.5px;top:262.00px;font-size:6.4px;line-height:8.00px;color:#e6e8ea;text-align:center;width:18.8px;">ln</div>
<div style="left:764px;top:261.1px;width:18.8px;height:9.8px;border:0.7px solid #7c848c;border-radius:0.6px;"></div>
<div class="t" style="left:764px;top:262.00px;font-size:6.4px;line-height:8.00px;color:#e6e8ea;text-align:center;width:18.8px;">e^x</div>
<div style="left:670px;top:274.6px;width:18.8px;height:9.8px;border:0.7px solid #7c848c;border-radius:0.6px;"></div>
<div class="t" style="left:670px;top:275.50px;font-size:6.4px;line-height:8.00px;color:#e6e8ea;text-align:center;width:18.8px;">r2d</div>
<div style="left:693.5px;top:274.6px;width:18.8px;height:9.8px;border:0.7px solid #7c848c;border-radius:0.6px;"></div>
<div class="t" style="left:693.5px;top:275.50px;font-size:6.4px;line-height:8.00px;color:#e6e8ea;text-align:center;width:18.8px;">d2r</div>
<div style="left:717px;top:274.6px;width:18.8px;height:9.8px;border:0.7px solid #7c848c;border-radius:0.6px;"></div>
<div class="t" style="left:717px;top:275.50px;font-size:6.4px;line-height:8.00px;color:#e6e8ea;text-align:center;width:18.8px;">abs</div>
<div style="left:740.5px;top:274.6px;width:18.8px;height:9.8px;border:0.7px solid #7c848c;border-radius:0.6px;"></div>
<div class="t" style="left:740.5px;top:275.50px;font-size:6.4px;line-height:8.00px;color:#e6e8ea;text-align:center;width:18.8px;">rnd</div>
<div style="left:764px;top:274.6px;width:18.8px;height:9.8px;border:0.7px solid #7c848c;border-radius:0.6px;"></div>
<div class="t" style="left:764px;top:275.50px;font-size:6.4px;line-height:8.00px;color:#e6e8ea;text-align:center;width:18.8px;">trunc</div>
<div class="t" style="left:666px;top:293.55px;font-size:6.8px;line-height:8.50px;color:#f0f2f4;font-weight:bold;transform:scaleX(1.078);"><span class="c">变量</span><<</div>
<div style="left:669.5px;top:302.5px;width:10px;height:10px;background:#4a525c;border:0.6px solid #6a727c;"></div>
<svg style="left:670.5px;top:303.5px;" width="8" height="8" viewBox="0 0 8 8"><text x="3.5" y="7" font-size="8" fill="#3fa0ec" font-style="italic" font-family="Liberation Serif" text-anchor="middle">x</text><path d="M6 0.5 V3.5 M4.5 2 H7.5" stroke="#f0f0f0" stroke-width="0.7"/></svg>
<svg style="left:683.5px;top:303.5px;" width="8" height="8" viewBox="0 0 8 8"><text x="3.5" y="7" font-size="8" fill="#3fa0ec" font-style="italic" font-family="Liberation Serif" text-anchor="middle">x</text><path d="M6 0.5 V3.5 M4.5 2 H7.5" stroke="#f0b020" stroke-width="0.7"/></svg>
<svg style="left:696px;top:303.5px;" width="8" height="8" viewBox="0 0 8 8"><text x="3" y="6.5" font-size="7" fill="#9aa3ad" font-style="italic" font-family="Liberation Serif" text-anchor="middle">x</text><path d="M5 6 L7.5 8" stroke="#9aa3ad" stroke-width="0.6"/></svg>
<svg style="left:708.5px;top:303.5px;" width="7" height="8" viewBox="0 0 7 8"><rect x="0" y="0" width="7" height="8" fill="#f0f2f4"/><path d="M1.5 2 H5.5 M1.5 4 H5.5 M1.5 6 H4" stroke="#555" stroke-width="0.6"/></svg>
<div style="left:665px;top:312.8px;width:123px;height:69.2px;background:#434a54;border:0.6px solid #5c646c;"></div>
<div style="left:779.5px;top:313.5px;width:8px;height:68px;background:#3b424b;"></div>
<div style="left:780.5px;top:322px;width:6px;height:33.5px;background:#5a6168;"></div>
<svg style="left:781.5px;top:315.5px;" width="4" height="2.4" viewBox="0 0 4 2.4"><path d="M0 2.2 L2 0.3 L4 2.2" stroke="#8a9098" stroke-width="0.5" fill="none"/></svg>
<svg style="left:781.5px;top:377px;" width="4" height="2.4" viewBox="0 0 4 2.4"><path d="M0 0 L2 2 L4 0" stroke="#8a9098" stroke-width="0.5" fill="none"/></svg>
<div style="left:667.5px;top:315.8px;width:5px;height:5px;background:#e8e8e8;border:0.5px solid #888;"></div>
<div style="left:668.5px;top:318px;width:3px;height:0.8px;background:#333;"></div>
<svg style="left:676.5px;top:314.5px;" width="7" height="6.5" viewBox="0 0 7 6.5"><path d="M0 1 H3 L4 2 H7 V6.5 H0z" fill="#f0b048"/><path d="M3 4 L7 7" stroke="#3fa0ec" stroke-width="1"/></svg>
<div class="t" style="left:687px;top:314.32px;font-size:6.2px;line-height:7.75px;color:#e6e8ea;transform:scaleX(0.955);"><span class="c">变量样例</span></div>
<div class="t" style="left:689px;top:324.12px;font-size:7px;line-height:8.75px;color:#3fa0ec;font-family:Liberation Serif;font-weight:bold;">k</div>
<div class="t" style="left:697px;top:324.38px;font-size:6.6px;line-height:8.25px;color:#e6e8ea;">Phi</div>
<div class="t" style="left:688.5px;top:333.46px;font-size:8px;line-height:10.00px;color:#3fa0ec;font-family:Liberation Serif;font-style:italic;">x</div>
<div class="t" style="left:697px;top:334.33px;font-size:6.6px;line-height:8.25px;color:#e6e8ea;">dee</div>
<div class="t" style="left:688.5px;top:343.42px;font-size:8px;line-height:10.00px;color:#3fa0ec;font-family:Liberation Serif;font-style:italic;">x</div>
<div class="t" style="left:697px;top:344.30px;font-size:6.6px;line-height:8.25px;color:#e6e8ea;">ille</div>
<div class="t" style="left:688.5px;top:353.38px;font-size:8px;line-height:10.00px;color:#3fa0ec;font-family:Liberation Serif;font-style:italic;">x</div>
<div class="t" style="left:697px;top:354.25px;font-size:6.6px;line-height:8.25px;color:#e6e8ea;">mee</div>
<div class="t" style="left:688.5px;top:363.34px;font-size:8px;line-height:10.00px;color:#3fa0ec;font-family:Liberation Serif;font-style:italic;">x</div>
<div class="t" style="left:697px;top:364.22px;font-size:6.6px;line-height:8.25px;color:#e6e8ea;">nee</div>
<div class="t" style="left:688.5px;top:373.30px;font-size:8px;line-height:10.00px;color:#3fa0ec;font-family:Liberation Serif;font-style:italic;">x</div>
<div class="t" style="left:697px;top:374.18px;font-size:6.6px;line-height:8.25px;color:#e6e8ea;">rad</div>
<div class="t" style="left:666px;top:383.52px;font-size:6.2px;line-height:7.75px;color:#e6e8ea;transform:scaleX(0.955);"><span class="c">详细信息</span></div>
<div style="left:666px;top:393px;width:122px;height:19.5px;border:0.6px solid #5c646c;border-bottom:none;"></div>
<svg style="left:660px;top:414.5px;" width="8" height="7.5" viewBox="0 0 8 7.5"><rect x="0.4" y="0.4" width="7.2" height="6.7" stroke="#3fa0ec" stroke-width="0.8" fill="#2a4a6a"/><path d="M1.5 2.5 H6.5 M1.5 4.5 H6.5" stroke="#9ac8f0" stroke-width="0.6" stroke-dasharray="1 0.5"/></svg>
<div class="t" style="left:670px;top:414.93px;font-size:6.2px;line-height:7.75px;color:#c8ccd0;transform:scaleX(0.935);"><span class="c">毫米</span></div>
<svg style="left:684px;top:417.3px;" width="5" height="2.8" viewBox="0 0 5 2.8"><path d="M0 0 H5 L2.5 2.8z" fill="#e8e8e8"/></svg>
<svg style="left:693px;top:414px;" width="8.5" height="8.5" viewBox="0 0 8.5 8.5"><path d="M4.25 0.5 L5 5 L8.3 8 L4.25 6.3 L0.2 8 L3.5 5z" fill="#5ab4f0"/></svg>
<div class="t" style="left:703px;top:415.18px;font-size:5.8px;line-height:7.25px;color:#8a9098;transform:scaleX(1.125);">1:1</div>
<svg style="left:714px;top:417.3px;" width="5" height="2.8" viewBox="0 0 5 2.8"><path d="M0 0 H5 L2.5 2.8z" fill="#e8e8e8"/></svg>
<svg style="left:725px;top:414px;" width="8.5" height="8.5" viewBox="0 0 8.5 8.5"><path d="M4.25 0.5 L5 5 L8.3 8 L4.25 6.3 L0.2 8 L3.5 5z" fill="#5ab4f0"/><circle cx="6.8" cy="6.8" r="1.5" fill="#f0b020"/></svg>
<svg style="left:737px;top:414px;" width="8.5" height="8.5" viewBox="0 0 8.5 8.5"><path d="M4.25 0.5 L5 5 L8.3 8 L4.25 6.3 L0.2 8 L3.5 5z" fill="#5ab4f0"/><path d="M1 1.5 L3 4" stroke="#e0e0e0" stroke-width="0.8"/></svg>
<svg style="left:748.5px;top:414px;" width="8.5" height="8.5" viewBox="0 0 8.5 8.5"><rect x="0.5" y="3.5" width="4.5" height="4.5" stroke="#d8dce0" stroke-width="0.8" fill="none"/><circle cx="5.8" cy="3" r="2.4" stroke="#d8dce0" stroke-width="0.8" fill="#2f343c"/></svg>
<svg style="left:759px;top:414px;" width="8" height="8" viewBox="0 0 8 8"><circle cx="4" cy="4" r="2.3" stroke="#3fa0ec" stroke-width="1.7" fill="none" stroke-dasharray="1.1 0.7"/></svg>
<svg style="left:769px;top:414.5px;" width="8" height="7.5" viewBox="0 0 8 7.5"><rect x="0.5" y="0.5" width="7" height="6.5" rx="1" stroke="#d8dce0" stroke-width="0.8" fill="none"/><rect x="2.5" y="2.2" width="3" height="3" stroke="#d8dce0" stroke-width="0.6" fill="none"/></svg>
<svg style="left:781px;top:414px;" width="8" height="8" viewBox="0 0 8 8"><path d="M0.5 2.5 V0.5 H2.5 M5.5 0.5 H7.5 V2.5 M7.5 5.5 V7.5 H5.5 M2.5 7.5 H0.5 V5.5" stroke="#d8dce0" stroke-width="0.8" fill="none"/></svg>
<svg style="left:792px;top:414px;" width="8" height="8" viewBox="0 0 8 8"><path d="M0.5 1 H7.5 M0.5 4 H7.5 M0.5 7 H7.5" stroke="#3fa0ec" stroke-width="1.1"/></svg>
</body></html>
